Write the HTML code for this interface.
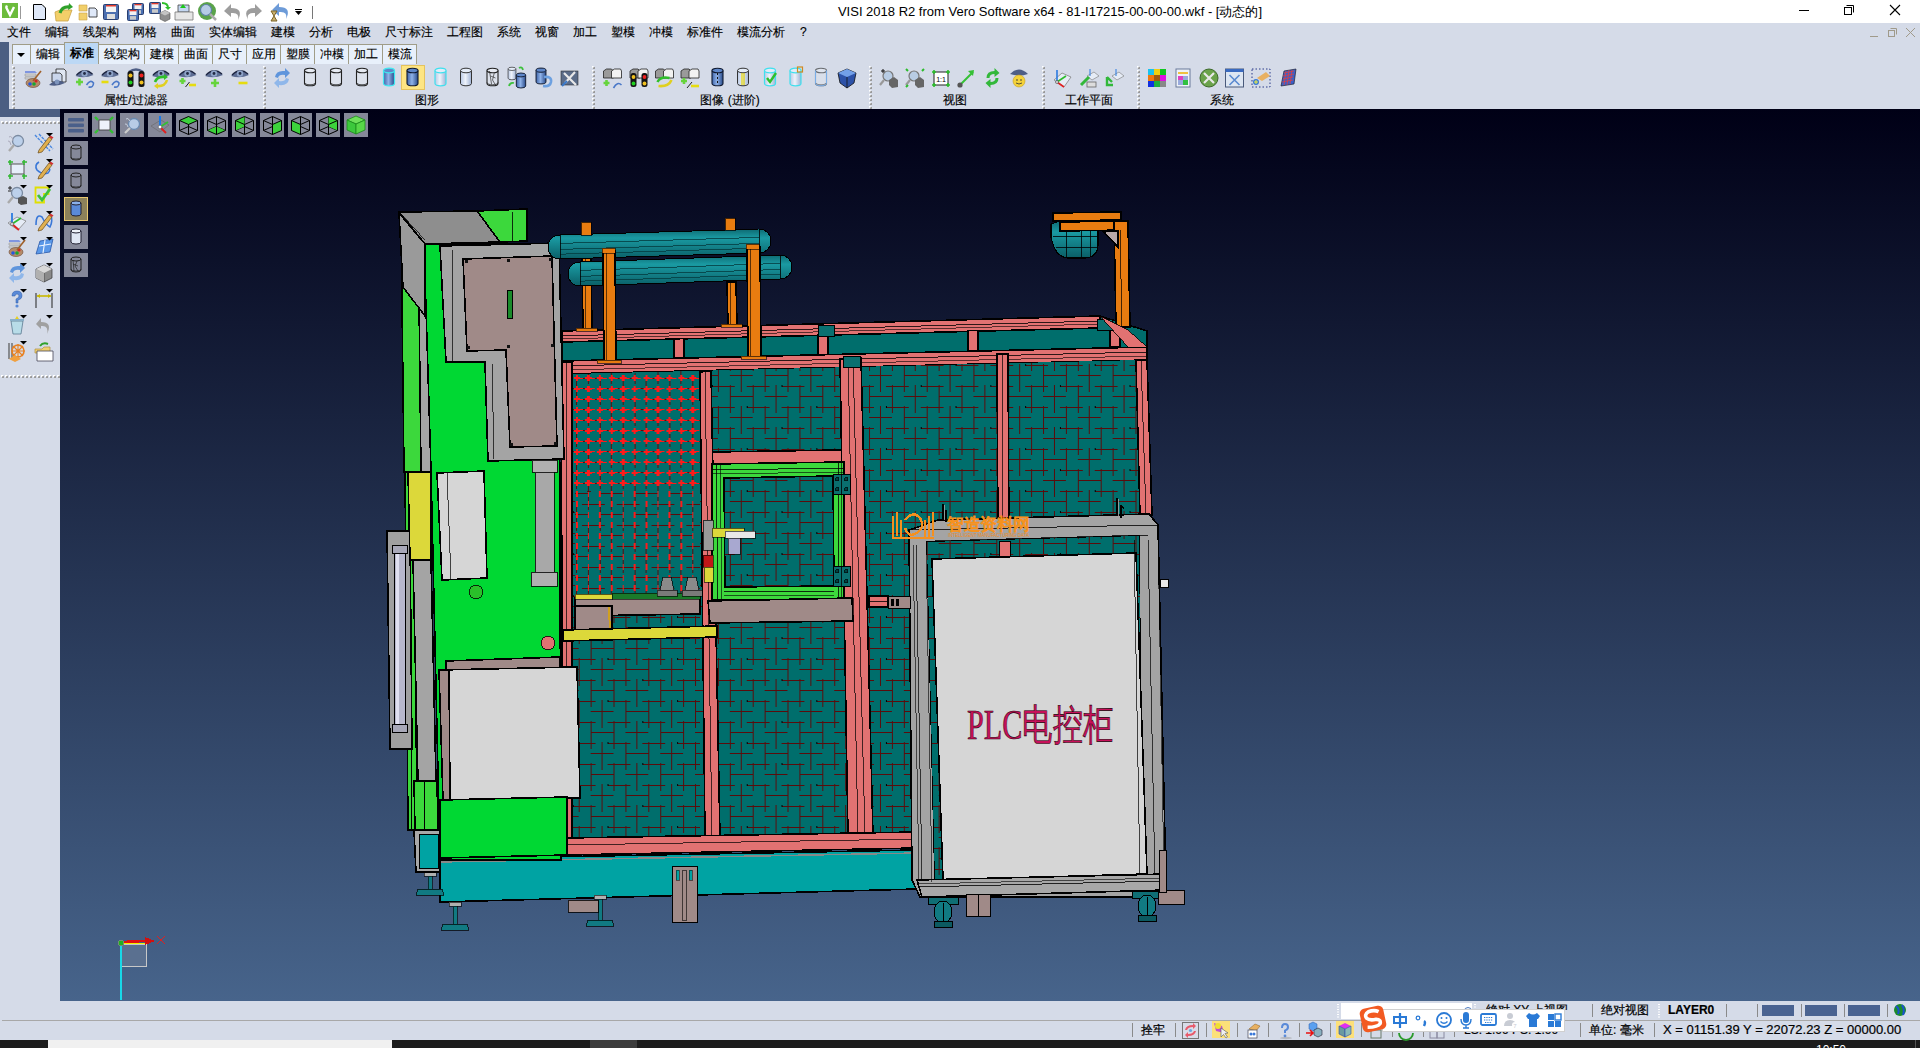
<!DOCTYPE html>
<html><head><meta charset="utf-8">
<style>
*{margin:0;padding:0;box-sizing:border-box}
html,body{width:1920px;height:1048px;overflow:hidden;background:#d5dbe8;font-family:"Liberation Sans",sans-serif;font-size:12px;color:#000}
.a{position:absolute}
#title{left:0;top:0;width:1920px;height:23px;background:#fff}
#ttext{left:0;top:4px;width:2100px;text-align:center;font-size:13px;line-height:16px;color:#000;white-space:nowrap}
#menu{left:0;top:23px;width:1920px;height:19px;background:#d5dbe8}
.mi{position:absolute;top:2px;font-size:12px;line-height:15px;white-space:nowrap;-webkit-text-stroke:.15px #000}
#lblue{left:0;top:42px;width:9px;height:75px;background:#4b5e82}
#ublue{left:0;top:109px;width:60px;height:8px;background:#4b5e82}
#ribbon{left:9px;top:42px;width:1911px;height:67px;background:#d5dbe8}
.tab{-webkit-text-stroke:.15px #000;position:absolute;top:44px;height:20px;border:1px solid #a09d88;border-bottom:none;background:#e8f0fb;font-size:12px;line-height:18px;text-align:center;white-space:nowrap}
.tab.sel{-webkit-text-stroke:0;top:42px;height:22px;background:#bcd8f5;line-height:20px}
.glab{position:absolute;top:93px;font-size:12px;line-height:14px;white-space:nowrap;text-align:center;-webkit-text-stroke:.15px #000}
.sep{position:absolute;top:64px;width:4px;height:45px;background-image:linear-gradient(135deg,#fff 0 45%,#8a8a8a 55% 100%);background-size:4px 4px;-webkit-mask-image:linear-gradient(#000 0 0);}
#ltool{left:0;top:117px;width:60px;height:884px;background:#d5dbe8}
#view{left:60px;top:109px;width:1860px;height:892px;background:linear-gradient(#000016,#47648b)}
#status{left:0;top:1001px;width:1920px;height:39px;background:#d5dbe8}
#task{left:0;top:1040px;width:1920px;height:8px;background:#1c1c1c}
.tile{position:absolute;width:24px;height:24px;background:#858899}
.st{position:absolute;font-size:12px;line-height:15px;white-space:nowrap;-webkit-text-stroke:.2px #000}
</style></head><body>

<div id="title" class="a"></div>
<div id="ttext" class="a">VISI 2018 R2 from Vero Software x64 - 81-I17215-00-00-00.wkf - [动态的]</div>
<div id="menu" class="a">
<span class="mi" style="left:7px">文件</span>
<span class="mi" style="left:45px">编辑</span>
<span class="mi" style="left:83px">线架构</span>
<span class="mi" style="left:133px">网格</span>
<span class="mi" style="left:171px">曲面</span>
<span class="mi" style="left:209px">实体编辑</span>
<span class="mi" style="left:271px">建模</span>
<span class="mi" style="left:309px">分析</span>
<span class="mi" style="left:347px">电极</span>
<span class="mi" style="left:385px">尺寸标注</span>
<span class="mi" style="left:447px">工程图</span>
<span class="mi" style="left:497px">系统</span>
<span class="mi" style="left:535px">视窗</span>
<span class="mi" style="left:573px">加工</span>
<span class="mi" style="left:611px">塑模</span>
<span class="mi" style="left:649px">冲模</span>
<span class="mi" style="left:687px">标准件</span>
<span class="mi" style="left:737px">模流分析</span>
<span class="mi" style="left:800px">?</span>
</div>
<div id="lblue" class="a"></div>
<div id="ribbon" class="a"></div>
<div id="ublue" class="a"></div>
<div id="ltool" class="a"></div>
<div id="view" class="a"></div>
<div id="status" class="a"></div>
<div id="task" class="a"></div>

<svg class="a" style="left:0;top:0" width="1920" height="110" viewBox="0 0 1920 110">
<defs>
<linearGradient id="gcyl" x1="0" x2="1"><stop offset="0" stop-color="#3d63a8"/><stop offset=".45" stop-color="#8fb2e8"/><stop offset="1" stop-color="#284a8a"/></linearGradient>
<linearGradient id="gcylL" x1="0" x2="1"><stop offset="0" stop-color="#b8c8e4"/><stop offset=".45" stop-color="#eef3fb"/><stop offset="1" stop-color="#9fb2d4"/></linearGradient>
<symbol id="eye" viewBox="0 0 20 12"><path d="M1,8 Q10,-2 19,7 Q10,11 1,8Z" fill="#5d6d93"/><path d="M2,7 Q10,-1 18,6" stroke="#1d2540" stroke-width="1.3" fill="none"/><circle cx="10" cy="5.5" r="3.2" fill="#8fa4c8"/><circle cx="10" cy="5.5" r="1.4" fill="#222a44"/></symbol>
<symbol id="cylO" viewBox="0 0 14 20"><path d="M1.5,3.5 V16.5 A5.5,2.3 0 0 0 12.5,16.5 V3.5" fill="#dde2ec" stroke="#222" stroke-width="1.1"/><ellipse cx="7" cy="3.5" rx="5.5" ry="2.3" fill="#e6eaf2" stroke="#222" stroke-width="1.1"/><path d="M1.5,15.5 A5.5,2.3 0 0 0 12.5,15.5" fill="none" stroke="#222" stroke-width=".8"/></symbol>
<symbol id="cylB" viewBox="0 0 14 20"><path d="M1.5,3.5 V16.5 A5.5,2.3 0 0 0 12.5,16.5 V3.5" fill="url(#gcyl)" stroke="#101a30" stroke-width="1.1"/><ellipse cx="7" cy="3.5" rx="5.5" ry="2.3" fill="#5e86c8" stroke="#101a30" stroke-width="1.1"/></symbol>
<symbol id="cylC" viewBox="0 0 14 20"><path d="M1.5,3.5 V16.5 A5.5,2.3 0 0 0 12.5,16.5 V3.5" fill="url(#gcyl)" stroke="#3ee8f0" stroke-width="1.2"/><ellipse cx="7" cy="3.5" rx="5.5" ry="2.3" fill="#5e86c8" stroke="#3ee8f0" stroke-width="1.2"/></symbol>
<symbol id="cylL" viewBox="0 0 14 20"><path d="M1.5,3.5 V16.5 A5.5,2.3 0 0 0 12.5,16.5 V3.5" fill="url(#gcylL)" stroke="#40e0ee" stroke-width="1.2"/><ellipse cx="7" cy="3.5" rx="5.5" ry="2.3" fill="#e4ecf8" stroke="#40e0ee" stroke-width="1.2"/></symbol>
<symbol id="cylG" viewBox="0 0 14 20"><path d="M1.5,3.5 V16.5 A5.5,2.3 0 0 0 12.5,16.5 V3.5" fill="url(#gcylL)" stroke="#333" stroke-width="1"/><ellipse cx="7" cy="3.5" rx="5.5" ry="2.3" fill="#e4ecf8" stroke="#333" stroke-width="1"/></symbol>
<symbol id="cubes" viewBox="0 0 20 12"><path d="M1,3 L4,1 H9 L11,3 V10 H1Z" fill="#9a9a9a" stroke="#222" stroke-width=".8"/><path d="M9,3 L12,1 H18 L19,3 V10 H9Z" fill="#f2f2f2" stroke="#222" stroke-width=".8"/></symbol>
</defs>
<!-- title bar icons -->
<rect x="2" y="3" width="16" height="15" fill="#6cbb3c"/><path d="M6,7 L10,15 L14,7" stroke="#fff" stroke-width="2.4" fill="none"/><circle cx="6.5" cy="6.5" r="1.2" fill="#fff"/>
<rect x="20" y="6" width="1" height="13" fill="#999"/>
<path d="M33.5,4.5 H42 L45.5,8 V19.5 H33.5Z" fill="#dfe8f8" stroke="#000" stroke-width="1"/>
<path d="M55,12 L60,10 H72 L68,21 H56Z" fill="#f3cf69" stroke="#c9a247" stroke-width=".8"/><path d="M60,13 Q62,6 70,7" stroke="#2fa12a" stroke-width="3" fill="none"/><path d="M69,3 L73,7 L68,10Z" fill="#2fa12a"/>
<path d="M79,5 H87 V11 H79Z M79,13 H87 V20 H79Z" fill="#f1cf6a" stroke="#c9a247" stroke-width=".6"/><path d="M89,8 H95 L97,10 V17 H89Z" fill="#dfe8f8" stroke="#222" stroke-width=".8"/>
<rect x="103.5" y="4.5" width="15" height="15" rx="1" fill="#4c6fb0" stroke="#2a3f70"/><rect x="106" y="5" width="10" height="7" fill="#f4f4f4"/><rect x="106" y="5" width="10" height="1.5" fill="#e23b2e"/><rect x="107" y="14" width="8" height="5" fill="#ddd"/>
<rect x="132.5" y="3.5" width="11" height="11" rx="1" fill="#4a6fb2" stroke="#2a3f70" stroke-width="1"/><rect x="134.5" y="4" width="7" height="5.0" fill="#f2f2f2"/><rect x="134.5" y="4" width="7" height="1.3" fill="#e03a2e"/><rect x="135" y="10.2" width="6" height="3.6" fill="#c8c8c8"/><rect x="127.5" y="9.5" width="11" height="11" rx="1" fill="#4a6fb2" stroke="#2a3f70" stroke-width="1"/><rect x="129.5" y="10" width="7" height="5.0" fill="#f2f2f2"/><rect x="129.5" y="10" width="7" height="1.3" fill="#e03a2e"/><rect x="130" y="16.1" width="6" height="3.6" fill="#c8c8c8"/><rect x="149.5" y="2.5" width="11" height="11" rx="1" fill="#4a6fb2" stroke="#2a3f70" stroke-width="1"/><rect x="151.5" y="3" width="7" height="5.0" fill="#f2f2f2"/><rect x="151.5" y="3" width="7" height="1.3" fill="#e03a2e"/><rect x="152" y="9.2" width="6" height="3.6" fill="#c8c8c8"/><path d="M160,13 L165,10.5 L170,13 V19 L165,21.5 L160,19Z" fill="#8e8e8e" stroke="#555" stroke-width=".6"/><path d="M160,13 L165,15.5 L170,13 L165,10.5Z" fill="#c4c4c4"/><path d="M162,3 Q168,3 168,8" stroke="#2fbf2a" stroke-width="2" fill="none"/><path d="M165,7 L168,10 L171,7Z" fill="#2fbf2a"/><path d="M178,5 H189 V12 H178Z" fill="#c4d7f2" stroke="#444" stroke-width=".8"/><path d="M175,12 H193 V20 H175Z" fill="#e6e6e6" stroke="#777" stroke-width=".8"/><path d="M183,4 L180,8 H186Z" fill="#1cc61c"/>
<circle cx="207" cy="11" r="9" fill="#5aa34a"/><circle cx="206" cy="10" r="5.5" fill="#b6cce6" stroke="#5c7fa6" stroke-width="1.2"/><path d="M210,14 L216,20" stroke="#aaa" stroke-width="2.5"/>
<path d="M231,4 L224,11 L231,17 V13 Q240,12 238,20 Q244,8 231,8Z" fill="#9d9d9d"/>
<path d="M255,4 L262,11 L255,17 V13 Q246,12 248,20 Q242,8 255,8Z" fill="#9d9d9d"/>
<path d="M279,3 L272,10 L279,16 V12 Q288,11 286,19 Q292,7 279,7Z" fill="#6d9bd8"/><path d="M271,11 H277 L271,21 H277Z" fill="#c8b070" stroke="#7a6225" stroke-width="1"/>
<rect x="295" y="9" width="7" height="1" fill="#000"/><path d="M295,11 H302 L298.5,15Z" fill="#000"/>
<rect x="312" y="6" width="1" height="13" fill="#777"/>
<!-- window controls -->
<rect x="1799" y="10" width="10" height="1" fill="#000"/>
<rect x="1844.5" y="7.5" width="7" height="7" fill="none" stroke="#000"/><path d="M1846.5,5.5 H1853.5 V12.5" fill="none" stroke="#000"/>
<path d="M1890,5 L1900,15 M1900,5 L1890,15" stroke="#000" stroke-width="1.1"/>
<!-- mdi controls -->
<rect x="1870" y="36" width="8" height="1" fill="#a09a8a"/>
<rect x="1888.5" y="30.5" width="6" height="6" fill="none" stroke="#a09a8a"/><path d="M1890.5,28.5 H1896.5 V34.5" fill="none" stroke="#a09a8a"/>
<path d="M1906,28 L1915,37 M1915,28 L1906,37" stroke="#a09a8a" stroke-width="1"/>
<g transform="translate(23,68)"><path d="M2,3 H12 L14,5 H2Z" fill="#7f95e0"/><path d="M2,6 H13 V8 H2Z M2,9 H13 V11 H2Z" fill="#d8d8d8" stroke="#888" stroke-width=".5"/><ellipse cx="10" cy="15" rx="7" ry="4.5" fill="#b58a68" stroke="#6a4a36" stroke-width=".6"/><circle cx="7" cy="16" r="1.8" fill="#2457e0"/><circle cx="11" cy="16" r="1.8" fill="#19a632"/><circle cx="13" cy="13" r="1.6" fill="#d02424"/><path d="M10,13 L18,3" stroke="#a0602a" stroke-width="1.6"/></g>
<g transform="translate(48,68)"><path d="M8,1 H16 L18,3 V14 H8Z" fill="#dfe6f2" stroke="#222" stroke-width=".8"/><path d="M4,5 H12 L14,7 V14 H4Z" fill="#cad6ec" stroke="#222" stroke-width=".8"/><path d="M1,17 Q9,9 17,15 Q9,19 1,17Z" fill="#4e5e86"/><circle cx="9" cy="14" r="2.4" fill="#7d94bc"/></g>
<g transform="translate(74.5,68)"><use href="#eye" x="0" y="0" width="20" height="12"/><path d="M1.5,14h7M5,10.5v7" stroke="#66d43c" stroke-width="2.6"/><path d="M12,17 Q16,11 19,15 Q19,20 14,19" stroke="#4a78c8" stroke-width="1.6" fill="none"/></g>
<g transform="translate(100,68)"><use href="#eye" x="0" y="0" width="20" height="12"/><path d="M1.5,14h7" stroke="#e6dc10" stroke-width="2.6"/><path d="M12,17 Q16,11 19,15 Q19,20 14,19" stroke="#4a78c8" stroke-width="1.6" fill="none"/></g>
<g transform="translate(126,68)"><path d="M3,4 Q10,-1 17,4" stroke="#4e5e86" stroke-width="2.5" fill="none"/><rect x="1.5" y="3" width="6" height="16" rx="2.5" fill="#151515"/><rect x="12.5" y="3" width="6" height="16" rx="2.5" fill="#151515"/><circle cx="4.5" cy="7.5" r="2" fill="#f0c020"/><circle cx="4.5" cy="14.5" r="2" fill="#20d020"/><circle cx="15.5" cy="7.5" r="2" fill="#f02020"/><circle cx="15.5" cy="14.5" r="2" fill="#f0c020"/></g>
<g transform="translate(151,68)"><use href="#eye" x="0" y="0" width="20" height="12"/><path d="M4,14 Q6,8 14,9" stroke="#2fbf2a" stroke-width="2.6" fill="none"/><path d="M16,12 Q14,19 5,18" stroke="#e0d020" stroke-width="2.6" fill="none"/><path d="M13,6 L17,9 L13,12Z" fill="#2fbf2a"/><path d="M7,15 L3,18 L7,21Z" fill="#e0d020"/></g>
<g transform="translate(177.5,68)"><use href="#eye" x="0" y="0" width="20" height="12"/><path d="M2.0,13h6M5,10.0v6" stroke="#66d43c" stroke-width="2.6"/><path d="M8,19 L12,14" stroke="#222" stroke-width="1"/><path d="M11.5,17h7" stroke="#e6dc10" stroke-width="2.6"/></g>
<g transform="translate(204,68)"><use href="#eye" x="0" y="0" width="20" height="12"/><path d="M7.0,15h8M11,11.0v8" stroke="#66d43c" stroke-width="2.6"/></g>
<g transform="translate(230,68)"><use href="#eye" x="0" y="0" width="20" height="12"/><path d="M8.5,15h9" stroke="#e6dc10" stroke-width="2.6"/></g>
<g transform="translate(272,68)"><path d="M3,9 Q4,2 13,3 L13,0 L18,5 L13,10 V7 Q7,6 6,10Z" fill="#5f95dc"/><path d="M17,11 Q16,18 7,17 L7,20 L2,15 L7,10 V13 Q13,14 14,10Z" fill="#8fb7ea"/></g>
<g transform="translate(303,67)"><use href="#cylO" width="14" height="20"/></g>
<g transform="translate(329,67)"><use href="#cylO" width="14" height="20"/></g>
<g transform="translate(355,67)"><use href="#cylO" width="14" height="20"/></g>
<g transform="translate(382,67)"><use href="#cylC" width="14" height="20"/></g>
<rect x="401.5" y="65.5" width="23" height="24" fill="#fde583" stroke="#e5c35e"/>
<g transform="translate(405.5,67)"><use href="#cylB" width="14" height="20"/></g>
<g transform="translate(433.5,67)"><use href="#cylL" width="14" height="20"/></g>
<g transform="translate(459,67)"><use href="#cylG" width="14" height="20"/></g>
<g transform="translate(485.5,67)"><use href="#cylO" width="14" height="20"/><path d="M4,4 L6,17 M9,5 L7,13 L10,18 M5,9 L10,11" stroke="#333" stroke-width=".7" fill="none"/></g>
<g transform="translate(507,66)"><use href="#cylG" width="10" height="15"/><use href="#cylB" x="8" y="6" width="12" height="17"/><path d="M12,2 Q15,0 16,4" stroke="#3cc03c" stroke-width="1.8" fill="none"/><path d="M2,20 Q3,16 7,17" stroke="#3cc03c" stroke-width="1.8" fill="none"/></g>
<g transform="translate(534,67)"><use href="#cylB" width="14" height="18"/><path d="M10,10 Q18,9 17,15 Q16,20 9,19" stroke="#6ca0e0" stroke-width="2.6" fill="none"/></g>
<g transform="translate(560,68)"><rect x="1" y="3" width="17" height="14" fill="#5b6c88" stroke="#333" stroke-width=".6"/><path d="M4,5 L16,17 M15,4 L5,15" stroke="#e8e8e8" stroke-width="2.2"/><path d="M2,18 L7,13" stroke="#3a78c8" stroke-width="2"/></g>
<g transform="translate(602.5,68)"><use href="#cubes" width="20" height="12"/><path d="M1.0,15h6M4,12.0v6" stroke="#66d43c" stroke-width="2.6"/><path d="M11,20 Q15,13 19,17" stroke="#4a78c8" stroke-width="1.6" fill="none"/></g>
<g transform="translate(629,68)"><use href="#cubes" width="20" height="12"/><rect x="1.5" y="5" width="6" height="14" rx="2.5" fill="#151515"/><rect x="12.5" y="5" width="6" height="14" rx="2.5" fill="#151515"/><circle cx="4.5" cy="9" r="1.9" fill="#f0c020"/><circle cx="4.5" cy="15.5" r="1.9" fill="#20d020"/><circle cx="15.5" cy="9" r="1.9" fill="#f02020"/><circle cx="15.5" cy="15.5" r="1.9" fill="#f0c020"/></g>
<g transform="translate(654.5,68)"><use href="#cubes" width="20" height="12"/><path d="M3,14 Q6,8 15,10" stroke="#2fbf2a" stroke-width="2.6" fill="none"/><path d="M17,12 Q14,19 4,18" stroke="#e0d020" stroke-width="2.6" fill="none"/></g>
<g transform="translate(680,68)"><use href="#cubes" width="20" height="12"/><path d="M1.0,13h6M4,10.0v6" stroke="#66d43c" stroke-width="2.6"/><path d="M7,20 L12,14" stroke="#222" stroke-width="1"/><path d="M11.0,18h8" stroke="#e6dc10" stroke-width="2.6"/></g>
<g transform="translate(710.5,67)"><use href="#cylB" width="14" height="20"/><path d="M7,6 V18" stroke="#111" stroke-width="1" stroke-dasharray="2,2"/></g>
<g transform="translate(736,67)"><use href="#cylG" width="14" height="20"/><path d="M6,6 V18 M8,6 V18" stroke="#e0d000" stroke-width="1.2"/></g>
<g transform="translate(763,67)"><use href="#cylL" width="14" height="20"/><path d="M4,11 L7,15 L13,6" stroke="#2cc02c" stroke-width="2.4" fill="none"/></g>
<g transform="translate(788.5,67)"><use href="#cylL" width="14" height="20"/><rect x="9" y="0" width="5" height="5" fill="none" stroke="#d08a20" stroke-width="1.2"/></g>
<g transform="translate(814,67)"><use href="#cylO" width="14" height="20"/><rect x="0" y="0" width="14" height="20" fill="#d5dbe8" opacity=".4"/><path d="M1.5,3.5 V16.5 A5.5,2.3 0 0 0 12.5,16.5 V3.5" fill="none" stroke="#7aaee8" stroke-width="1"/></g>
<g transform="translate(837,68)"><path d="M1,5 L10,1 L19,5 L17,15 L10,20 L3,15Z" fill="#2d52a8" stroke="#111" stroke-width=".8"/><path d="M1,5 L10,9 L19,5 L10,1Z" fill="#73a0e8"/><path d="M10,9 V20" stroke="#111" stroke-width=".8"/></g>
<g transform="translate(879,68)"><path d="M2,3h4M4,1v4" stroke="#111" stroke-width="1"/><circle cx="9" cy="8" r="5" fill="#b8cce4" stroke="#777" stroke-width="1.2"/><path d="M5,12 L1,17" stroke="#999" stroke-width="2.2"/><path d="M10,12 L15,9 L19,12 V19 L13,20 L10,17Z" fill="#666"/></g>
<g transform="translate(905,68)"><circle cx="9" cy="8" r="5" fill="#b8cce4" stroke="#777" stroke-width="1.2"/><path d="M5,12 L1,17" stroke="#999" stroke-width="2.2"/><path d="M10,12 L15,9 L19,12 V19 L13,20 L10,17Z" fill="#666"/><path d="M1,1 L3,3 M19,1 L17,3 M1,19 L3,17" stroke="#2cbc2c" stroke-width="2"/></g>
<g transform="translate(931,68)"><rect x="3" y="4" width="14" height="13" fill="#fff" stroke="#222"/><text x="10" y="14" font-size="7" text-anchor="middle" font-family="Liberation Sans">1:1</text><path d="M1,4h4M3,2v4M15,4h4M17,2v4M1,17h4M3,15v4M15,17h4M17,15v4" stroke="#2cbc2c" stroke-width="1.6"/></g>
<g transform="translate(956,68)"><path d="M5,16 L17,4" stroke="#35c035" stroke-width="2"/><path d="M12,3 L18,2 L17,8Z" fill="#35c035"/><circle cx="4" cy="17" r="2.6" fill="#555"/></g>
<g transform="translate(982.5,68)"><path d="M4,10 Q4,3 12,3 L12,0 L17,5 L12,9 V6 Q7,6 7,10Z" fill="#32b83a"/><path d="M16,10 Q16,17 8,17 L8,20 L3,15 L8,11 V14 Q13,14 13,10Z" fill="#32b83a"/></g>
<g transform="translate(1009,68)"><path d="M1,6 Q10,-3 19,6 Q10,9 1,6Z" fill="#4e5e86"/><circle cx="10" cy="13" r="6" fill="#f4d23a" stroke="#c8a020" stroke-width=".6"/><circle cx="8" cy="12" r=".8" fill="#333"/><circle cx="12" cy="12" r=".8" fill="#333"/><path d="M7,15 Q10,17 13,15" stroke="#333" stroke-width=".8" fill="none"/></g>
<g transform="translate(1052,68)"><path d="M2,12 L10,5 L19,9 L12,19Z" fill="#e6ecf6" stroke="#777" stroke-width=".7"/><path d="M5,14 V2" stroke="#2a7ae0" stroke-width="1.6"/><path d="M5,14 L14,8" stroke="#2cbc2c" stroke-width="1.6"/><path d="M5,14 L12,19" stroke="#e02020" stroke-width="1.6"/><circle cx="5" cy="14" r="1.6" fill="#ccc" stroke="#444" stroke-width=".5"/></g>
<g transform="translate(1079,68)"><path d="M8,8 L15,4 L20,8 L13,12Z" fill="#e6ecf6" stroke="#777" stroke-width=".6"/><path d="M2,17 L10,9" stroke="#32b83a" stroke-width="3"/><rect x="8" y="14" width="9" height="5" fill="#ddd" stroke="#666" stroke-width=".8"/><path d="M11,8 V1" stroke="#2a7ae0" stroke-width="1"/></g>
<g transform="translate(1104,68)"><path d="M8,8 L15,4 L20,8 L13,12Z" fill="#e6ecf6" stroke="#777" stroke-width=".6"/><path d="M3,9 L8,14 M3,9 V17 H9" stroke="#32b83a" stroke-width="2.4" fill="none"/><path d="M12,8 V1" stroke="#2a7ae0" stroke-width="1"/></g>
<g transform="translate(1147,68)"><rect x="1" y="1" width="6" height="6" fill="#19c3f0"/><rect x="7" y="1" width="6" height="6" fill="#f0d010"/><rect x="13" y="1" width="6" height="6" fill="#10c820"/><rect x="1" y="7" width="6" height="6" fill="#f07810"/><rect x="7" y="7" width="6" height="6" fill="#a05a10"/><rect x="13" y="7" width="6" height="6" fill="#e010e0"/><rect x="1" y="13" width="6" height="6" fill="#1030e0"/><rect x="7" y="13" width="6" height="6" fill="#20b040"/><rect x="13" y="13" width="6" height="6" fill="#888888"/></g>
<g transform="translate(1173,68)"><rect x="3" y="1" width="14" height="18" fill="#eef2f8" stroke="#6a7a9a"/><rect x="5" y="4" width="10" height="2" fill="#f0c040"/><rect x="5" y="8" width="10" height="9" fill="#9ad"/><rect x="5" y="8" width="5" height="4" fill="#e040c0"/><rect x="10" y="12" width="5" height="5" fill="#30c040"/></g>
<g transform="translate(1199,68)"><circle cx="10" cy="10" r="9" fill="#6aa24a" stroke="#3d6a2a" stroke-width="1"/><path d="M5,5 L15,15 M15,5 L5,15" stroke="#e8e8e8" stroke-width="2.2"/></g>
<g transform="translate(1224.5,68)"><rect x="1" y="1" width="18" height="18" fill="#dde6f2" stroke="#4a5a7a"/><rect x="1" y="1" width="18" height="3" fill="#3a6ac0"/><path d="M5,7 L15,17 M15,7 L5,17" stroke="#5a8ad0" stroke-width="1.6"/></g>
<g transform="translate(1251,68)"><path d="M1,1h18v18h-18z" fill="none" stroke="#2a3a8a" stroke-width="1" stroke-dasharray="1.5,2"/><path d="M6,10 L15,4 L19,8 L11,13Z" fill="#e8b060"/><circle cx="5" cy="14" r="3" fill="#3a7ad8"/><path d="M3,14h4M5,12v4" stroke="#f0f040" stroke-width="1"/></g>
<g transform="translate(1277,68)"><path d="M4,18 L7,3 L19,1 L17,16Z" fill="#3a60c8" stroke="#223" stroke-width=".7"/><path d="M7,5 L17,3 M6,8 L17,6 M6,11 L16,9 M5,14 L16,12 M9,3 L7,17 M12,2 L10,17 M15,2 L13,16" stroke="#e04040" stroke-width=".8"/></g>
</svg>

<div class="tab" style="left:12px;width:19px"><svg width="16" height="18" style="position:absolute;left:1px;top:0"><path d="M3,8 H11 L7,12Z" fill="#000"/></svg></div>
<div class="tab" style="left:30px;width:35px;">编辑</div>
<div class="tab sel" style="left:64px;width:35px;font-weight:bold;">标准</div>
<div class="tab" style="left:98px;width:47px;">线架构</div>
<div class="tab" style="left:144px;width:35px;">建模</div>
<div class="tab" style="left:178px;width:35px;">曲面</div>
<div class="tab" style="left:212px;width:35px;">尺寸</div>
<div class="tab" style="left:246px;width:35px;">应用</div>
<div class="tab" style="left:280px;width:35px;">塑膜</div>
<div class="tab" style="left:314px;width:35px;">冲模</div>
<div class="tab" style="left:348px;width:35px;">加工</div>
<div class="tab" style="left:382px;width:35px;">模流</div>
<div class="glab" style="left:76px;width:120px">属性/过滤器</div>
<div class="glab" style="left:367px;width:120px">图形</div>
<div class="glab" style="left:670px;width:120px">图像 (进阶)</div>
<div class="glab" style="left:895px;width:120px">视图</div>
<div class="glab" style="left:1029px;width:120px">工作平面</div>
<div class="glab" style="left:1162px;width:120px">系统</div>
<svg class="a" style="left:0;top:60px" width="1200" height="50"><rect x="13" y="7" width="2" height="2" fill="#9a9a9a"/><rect x="12" y="6" width="1.6" height="1.6" fill="#fff"/><rect x="13" y="11" width="2" height="2" fill="#9a9a9a"/><rect x="12" y="10" width="1.6" height="1.6" fill="#fff"/><rect x="13" y="15" width="2" height="2" fill="#9a9a9a"/><rect x="12" y="14" width="1.6" height="1.6" fill="#fff"/><rect x="13" y="19" width="2" height="2" fill="#9a9a9a"/><rect x="12" y="18" width="1.6" height="1.6" fill="#fff"/><rect x="13" y="23" width="2" height="2" fill="#9a9a9a"/><rect x="12" y="22" width="1.6" height="1.6" fill="#fff"/><rect x="13" y="27" width="2" height="2" fill="#9a9a9a"/><rect x="12" y="26" width="1.6" height="1.6" fill="#fff"/><rect x="13" y="31" width="2" height="2" fill="#9a9a9a"/><rect x="12" y="30" width="1.6" height="1.6" fill="#fff"/><rect x="13" y="35" width="2" height="2" fill="#9a9a9a"/><rect x="12" y="34" width="1.6" height="1.6" fill="#fff"/><rect x="13" y="39" width="2" height="2" fill="#9a9a9a"/><rect x="12" y="38" width="1.6" height="1.6" fill="#fff"/><rect x="13" y="43" width="2" height="2" fill="#9a9a9a"/><rect x="12" y="42" width="1.6" height="1.6" fill="#fff"/><rect x="13" y="47" width="2" height="2" fill="#9a9a9a"/><rect x="12" y="46" width="1.6" height="1.6" fill="#fff"/><rect x="264" y="7" width="2" height="2" fill="#9a9a9a"/><rect x="263" y="6" width="1.6" height="1.6" fill="#fff"/><rect x="264" y="11" width="2" height="2" fill="#9a9a9a"/><rect x="263" y="10" width="1.6" height="1.6" fill="#fff"/><rect x="264" y="15" width="2" height="2" fill="#9a9a9a"/><rect x="263" y="14" width="1.6" height="1.6" fill="#fff"/><rect x="264" y="19" width="2" height="2" fill="#9a9a9a"/><rect x="263" y="18" width="1.6" height="1.6" fill="#fff"/><rect x="264" y="23" width="2" height="2" fill="#9a9a9a"/><rect x="263" y="22" width="1.6" height="1.6" fill="#fff"/><rect x="264" y="27" width="2" height="2" fill="#9a9a9a"/><rect x="263" y="26" width="1.6" height="1.6" fill="#fff"/><rect x="264" y="31" width="2" height="2" fill="#9a9a9a"/><rect x="263" y="30" width="1.6" height="1.6" fill="#fff"/><rect x="264" y="35" width="2" height="2" fill="#9a9a9a"/><rect x="263" y="34" width="1.6" height="1.6" fill="#fff"/><rect x="264" y="39" width="2" height="2" fill="#9a9a9a"/><rect x="263" y="38" width="1.6" height="1.6" fill="#fff"/><rect x="264" y="43" width="2" height="2" fill="#9a9a9a"/><rect x="263" y="42" width="1.6" height="1.6" fill="#fff"/><rect x="264" y="47" width="2" height="2" fill="#9a9a9a"/><rect x="263" y="46" width="1.6" height="1.6" fill="#fff"/><rect x="593" y="7" width="2" height="2" fill="#9a9a9a"/><rect x="592" y="6" width="1.6" height="1.6" fill="#fff"/><rect x="593" y="11" width="2" height="2" fill="#9a9a9a"/><rect x="592" y="10" width="1.6" height="1.6" fill="#fff"/><rect x="593" y="15" width="2" height="2" fill="#9a9a9a"/><rect x="592" y="14" width="1.6" height="1.6" fill="#fff"/><rect x="593" y="19" width="2" height="2" fill="#9a9a9a"/><rect x="592" y="18" width="1.6" height="1.6" fill="#fff"/><rect x="593" y="23" width="2" height="2" fill="#9a9a9a"/><rect x="592" y="22" width="1.6" height="1.6" fill="#fff"/><rect x="593" y="27" width="2" height="2" fill="#9a9a9a"/><rect x="592" y="26" width="1.6" height="1.6" fill="#fff"/><rect x="593" y="31" width="2" height="2" fill="#9a9a9a"/><rect x="592" y="30" width="1.6" height="1.6" fill="#fff"/><rect x="593" y="35" width="2" height="2" fill="#9a9a9a"/><rect x="592" y="34" width="1.6" height="1.6" fill="#fff"/><rect x="593" y="39" width="2" height="2" fill="#9a9a9a"/><rect x="592" y="38" width="1.6" height="1.6" fill="#fff"/><rect x="593" y="43" width="2" height="2" fill="#9a9a9a"/><rect x="592" y="42" width="1.6" height="1.6" fill="#fff"/><rect x="593" y="47" width="2" height="2" fill="#9a9a9a"/><rect x="592" y="46" width="1.6" height="1.6" fill="#fff"/><rect x="870" y="7" width="2" height="2" fill="#9a9a9a"/><rect x="869" y="6" width="1.6" height="1.6" fill="#fff"/><rect x="870" y="11" width="2" height="2" fill="#9a9a9a"/><rect x="869" y="10" width="1.6" height="1.6" fill="#fff"/><rect x="870" y="15" width="2" height="2" fill="#9a9a9a"/><rect x="869" y="14" width="1.6" height="1.6" fill="#fff"/><rect x="870" y="19" width="2" height="2" fill="#9a9a9a"/><rect x="869" y="18" width="1.6" height="1.6" fill="#fff"/><rect x="870" y="23" width="2" height="2" fill="#9a9a9a"/><rect x="869" y="22" width="1.6" height="1.6" fill="#fff"/><rect x="870" y="27" width="2" height="2" fill="#9a9a9a"/><rect x="869" y="26" width="1.6" height="1.6" fill="#fff"/><rect x="870" y="31" width="2" height="2" fill="#9a9a9a"/><rect x="869" y="30" width="1.6" height="1.6" fill="#fff"/><rect x="870" y="35" width="2" height="2" fill="#9a9a9a"/><rect x="869" y="34" width="1.6" height="1.6" fill="#fff"/><rect x="870" y="39" width="2" height="2" fill="#9a9a9a"/><rect x="869" y="38" width="1.6" height="1.6" fill="#fff"/><rect x="870" y="43" width="2" height="2" fill="#9a9a9a"/><rect x="869" y="42" width="1.6" height="1.6" fill="#fff"/><rect x="870" y="47" width="2" height="2" fill="#9a9a9a"/><rect x="869" y="46" width="1.6" height="1.6" fill="#fff"/><rect x="1043" y="7" width="2" height="2" fill="#9a9a9a"/><rect x="1042" y="6" width="1.6" height="1.6" fill="#fff"/><rect x="1043" y="11" width="2" height="2" fill="#9a9a9a"/><rect x="1042" y="10" width="1.6" height="1.6" fill="#fff"/><rect x="1043" y="15" width="2" height="2" fill="#9a9a9a"/><rect x="1042" y="14" width="1.6" height="1.6" fill="#fff"/><rect x="1043" y="19" width="2" height="2" fill="#9a9a9a"/><rect x="1042" y="18" width="1.6" height="1.6" fill="#fff"/><rect x="1043" y="23" width="2" height="2" fill="#9a9a9a"/><rect x="1042" y="22" width="1.6" height="1.6" fill="#fff"/><rect x="1043" y="27" width="2" height="2" fill="#9a9a9a"/><rect x="1042" y="26" width="1.6" height="1.6" fill="#fff"/><rect x="1043" y="31" width="2" height="2" fill="#9a9a9a"/><rect x="1042" y="30" width="1.6" height="1.6" fill="#fff"/><rect x="1043" y="35" width="2" height="2" fill="#9a9a9a"/><rect x="1042" y="34" width="1.6" height="1.6" fill="#fff"/><rect x="1043" y="39" width="2" height="2" fill="#9a9a9a"/><rect x="1042" y="38" width="1.6" height="1.6" fill="#fff"/><rect x="1043" y="43" width="2" height="2" fill="#9a9a9a"/><rect x="1042" y="42" width="1.6" height="1.6" fill="#fff"/><rect x="1043" y="47" width="2" height="2" fill="#9a9a9a"/><rect x="1042" y="46" width="1.6" height="1.6" fill="#fff"/><rect x="1138" y="7" width="2" height="2" fill="#9a9a9a"/><rect x="1137" y="6" width="1.6" height="1.6" fill="#fff"/><rect x="1138" y="11" width="2" height="2" fill="#9a9a9a"/><rect x="1137" y="10" width="1.6" height="1.6" fill="#fff"/><rect x="1138" y="15" width="2" height="2" fill="#9a9a9a"/><rect x="1137" y="14" width="1.6" height="1.6" fill="#fff"/><rect x="1138" y="19" width="2" height="2" fill="#9a9a9a"/><rect x="1137" y="18" width="1.6" height="1.6" fill="#fff"/><rect x="1138" y="23" width="2" height="2" fill="#9a9a9a"/><rect x="1137" y="22" width="1.6" height="1.6" fill="#fff"/><rect x="1138" y="27" width="2" height="2" fill="#9a9a9a"/><rect x="1137" y="26" width="1.6" height="1.6" fill="#fff"/><rect x="1138" y="31" width="2" height="2" fill="#9a9a9a"/><rect x="1137" y="30" width="1.6" height="1.6" fill="#fff"/><rect x="1138" y="35" width="2" height="2" fill="#9a9a9a"/><rect x="1137" y="34" width="1.6" height="1.6" fill="#fff"/><rect x="1138" y="39" width="2" height="2" fill="#9a9a9a"/><rect x="1137" y="38" width="1.6" height="1.6" fill="#fff"/><rect x="1138" y="43" width="2" height="2" fill="#9a9a9a"/><rect x="1137" y="42" width="1.6" height="1.6" fill="#fff"/><rect x="1138" y="47" width="2" height="2" fill="#9a9a9a"/><rect x="1137" y="46" width="1.6" height="1.6" fill="#fff"/></svg>

<svg class="a" style="left:0;top:0" width="380" height="380" viewBox="0 0 380 380"><g transform="translate(7,133)"><circle cx="11" cy="8" r="5.5" fill="#bcd0ea" stroke="#7a8aa0" stroke-width="1.3"/><path d="M7,12 L2,18" stroke="#aaa" stroke-width="2.4"/><path d="M2,4 Q5,2 6,8 M1,8 Q3,7 4,12" stroke="#aab" stroke-width="1" fill="none"/></g>
<g transform="translate(34,133)"><path d="M1,2 L16,18 M5,1 L19,16" stroke="#4a88e0" stroke-width="1.4" stroke-dasharray="3,1"/><path d="M5,17 L15,4 L18,6 L8,19 L4,20Z" fill="#e0b050" stroke="#6a4a1a" stroke-width=".7"/><path d="M15,4 L16.5,2.5 L19.5,4.5 L18,6Z" fill="#d03030"/><path d="M12,0 h7 l-3.5,3.5z" fill="#000"/></g>
<g transform="translate(7,159)"><rect x="4" y="5" width="13" height="10" fill="#e6eefa" stroke="#555" stroke-width="1"/><path d="M1,3h5M3,1v5M15,3h5M17,1v5M1,17h5M3,15v5M15,17h5M17,15v5" stroke="#33b833" stroke-width="1.6"/></g>
<g transform="translate(34,159)"><path d="M5,3 Q0,6 3,11 Q8,16 14,14 Q18,10 13,8" stroke="#3a78d8" stroke-width="1.6" fill="none"/><path d="M5,17 L15,4 L18,6 L8,19 L4,20Z" fill="#e0b050" stroke="#6a4a1a" stroke-width=".7"/><path d="M15,4 L16.5,2.5 L19.5,4.5 L18,6Z" fill="#d03030"/><path d="M12,0 h7 l-3.5,3.5z" fill="#000"/></g>
<g transform="translate(7,185)"><path d="M1,3h4M3,1v4M1,6h4" stroke="#111" stroke-width=".9"/><circle cx="10" cy="8" r="5.5" fill="#bcd0ea" stroke="#7a8aa0" stroke-width="1.3"/><path d="M6,12 L1,18" stroke="#aaa" stroke-width="2.4"/><path d="M11,13 L16,11 L20,13 V19 L14,20 L11,18Z" fill="#555"/><path d="M13,0 h7 l-3.5,3.5z" fill="#000"/></g>
<g transform="translate(34,185)"><path d="M1.5,2.5 H14.5 V9 H10 V17.5 H1.5Z" fill="none" stroke="#e0e000" stroke-width="1.8"/><path d="M4,10 L8,15 L16,4" stroke="#3cc03c" stroke-width="2.8" fill="none"/><path d="M12,0 h7 l-3.5,3.5z" fill="#000"/></g>
<g transform="translate(7,211)"><path d="M1,12 L10,6 L19,10 L11,19Z" fill="#e6ecf6" stroke="#777" stroke-width=".7"/><path d="M5,13 V2" stroke="#2a7ae0" stroke-width="1.8"/><path d="M5,13 L14,7" stroke="#2cbc2c" stroke-width="1.8"/><path d="M5,13 L12,19" stroke="#e02020" stroke-width="1.8"/><circle cx="5" cy="13" r="1.8" fill="#ccc" stroke="#444" stroke-width=".5"/><path d="M13,0 h7 l-3.5,3.5z" fill="#000"/></g>
<g transform="translate(34,211)"><path d="M2,14 Q2,2 8,6 Q12,14 16,16 Q19,10 17,5" stroke="#3a78d8" stroke-width="1.6" fill="none"/><path d="M5,17 L15,4 L18,6 L8,19 L4,20Z" fill="#e0b050" stroke="#6a4a1a" stroke-width=".7"/><path d="M15,4 L16.5,2.5 L19.5,4.5 L18,6Z" fill="#d03030"/><path d="M12,0 h7 l-3.5,3.5z" fill="#000"/></g>
<g transform="translate(7,237)"><path d="M2,3 H12 L14,5 H2Z" fill="#7f95e0"/><path d="M2,6 H13 V8 H2Z M2,9 H13 V11 H2Z" fill="#d8d8d8" stroke="#888" stroke-width=".5"/><ellipse cx="9" cy="15" rx="7" ry="4.5" fill="#b58a68" stroke="#6a4a36" stroke-width=".6"/><circle cx="6" cy="16" r="1.8" fill="#2457e0"/><circle cx="10" cy="16" r="1.8" fill="#19a632"/><circle cx="12" cy="13" r="1.6" fill="#d02424"/><path d="M10,13 L18,3" stroke="#a0602a" stroke-width="1.6"/><path d="M13,0 h7 l-3.5,3.5z" fill="#000"/></g>
<g transform="translate(34,237)"><path d="M2,17 L6,4 L19,2 L16,15Z" fill="#5a98e8" stroke="#2a58a8" stroke-width=".8"/><path d="M5,9 L17,7 M11,3 L9,16" stroke="#e8f2ff" stroke-width="1.2"/><path d="M12,0 h7 l-3.5,3.5z" fill="#000"/></g>
<g transform="translate(7,263)"><path d="M3,9 Q4,2 13,3 L13,0 L18,5 L13,10 V7 Q7,6 6,10Z" fill="#5f95dc"/><path d="M17,11 Q16,18 7,17 L7,20 L2,15 L7,10 V13 Q13,14 14,10Z" fill="#8fb7ea"/><path d="M13,0 h7 l-3.5,3.5z" fill="#000"/></g>
<g transform="translate(34,263)"><path d="M2,6 L10,2 L18,6 V15 L10,19 L2,15Z" fill="#8a8a8a" stroke="#333" stroke-width=".7"/><path d="M2,6 L10,10 L18,6 L10,2Z" fill="#d8d8d8"/><path d="M10,10 V19" stroke="#333" stroke-width=".7"/><path d="M2,6 L10,10 V19 L2,15Z" fill="#b0b0b0"/><path d="M12,0 h7 l-3.5,3.5z" fill="#000"/></g>
<g transform="translate(7,289)"><path d="M5,7 Q5,2 10,2 Q15,2 15,7 Q15,10 11,11 V14 H9 V10 Q12,9 12,7 Q12,5 10,5 Q8,5 8,7Z" fill="#5a8ad8" stroke="#2a5aa8" stroke-width=".5"/><circle cx="10" cy="17" r="1.6" fill="#5a8ad8"/><path d="M13,0 h7 l-3.5,3.5z" fill="#000"/></g>
<g transform="translate(34,289)"><path d="M2,4 V19 M18,4 V19" stroke="#333" stroke-width="1.1"/><path d="M3,7 H17" stroke="#c8b800" stroke-width="1.6"/><path d="M3,7 l3,-2 v4z M17,7 l-3,-2 v4z" fill="#c8b800"/><path d="M12,0 h7 l-3.5,3.5z" fill="#000"/></g>
<g transform="translate(7,315)"><path d="M4,6 H16 L14,19 H6Z" fill="#b8dce8" stroke="#5a7a90" stroke-width=".8"/><rect x="3" y="4" width="14" height="2" fill="#8ab0c8"/><path d="M8,4 L10,1 L12,4Z" fill="#e8d020"/><path d="M13,0 h7 l-3.5,3.5z" fill="#000"/></g>
<g transform="translate(34,315)"><path d="M7,3 L2,9 L7,14 V11 Q15,10 13,19 Q19,7 7,7Z" fill="#a0a0a0"/><path d="M12,0 h7 l-3.5,3.5z" fill="#000"/></g>
<g transform="translate(7,341)"><path d="M2,2 V18 M5,2 V18" stroke="#555" stroke-width="1.2"/><circle cx="11" cy="10" r="6" fill="none" stroke="#e88020" stroke-width="1.6"/><path d="M11,3 V17 M4,10 H18 M6,5 L16,15 M16,5 L6,15" stroke="#e88020" stroke-width="1.1"/><path d="M2,18 L8,14 L14,18 L8,21Z" fill="#f0a040"/><path d="M13,0 h7 l-3.5,3.5z" fill="#000"/></g>
<g transform="translate(34,341)"><path d="M1,8 H8 L10,6 H16 V12 H1Z" fill="#f0d070" stroke="#b09040" stroke-width=".7"/><path d="M3,10 H19 V20 H3Z" fill="#fff" stroke="#445" stroke-width=".8"/><path d="M6,5 Q9,1 14,3" stroke="#2fa12a" stroke-width="2" fill="none"/></g>
<rect x="1" y="121" width="2" height="2" fill="#fff"/><rect x="2" y="122" width="2" height="2" fill="#9a9a9a"/><rect x="1" y="121" width="1.5" height="1.5" fill="#fff"/>
<rect x="5" y="121" width="2" height="2" fill="#fff"/><rect x="6" y="122" width="2" height="2" fill="#9a9a9a"/><rect x="5" y="121" width="1.5" height="1.5" fill="#fff"/>
<rect x="9" y="121" width="2" height="2" fill="#fff"/><rect x="10" y="122" width="2" height="2" fill="#9a9a9a"/><rect x="9" y="121" width="1.5" height="1.5" fill="#fff"/>
<rect x="13" y="121" width="2" height="2" fill="#fff"/><rect x="14" y="122" width="2" height="2" fill="#9a9a9a"/><rect x="13" y="121" width="1.5" height="1.5" fill="#fff"/>
<rect x="17" y="121" width="2" height="2" fill="#fff"/><rect x="18" y="122" width="2" height="2" fill="#9a9a9a"/><rect x="17" y="121" width="1.5" height="1.5" fill="#fff"/>
<rect x="21" y="121" width="2" height="2" fill="#fff"/><rect x="22" y="122" width="2" height="2" fill="#9a9a9a"/><rect x="21" y="121" width="1.5" height="1.5" fill="#fff"/>
<rect x="25" y="121" width="2" height="2" fill="#fff"/><rect x="26" y="122" width="2" height="2" fill="#9a9a9a"/><rect x="25" y="121" width="1.5" height="1.5" fill="#fff"/>
<rect x="29" y="121" width="2" height="2" fill="#fff"/><rect x="30" y="122" width="2" height="2" fill="#9a9a9a"/><rect x="29" y="121" width="1.5" height="1.5" fill="#fff"/>
<rect x="33" y="121" width="2" height="2" fill="#fff"/><rect x="34" y="122" width="2" height="2" fill="#9a9a9a"/><rect x="33" y="121" width="1.5" height="1.5" fill="#fff"/>
<rect x="37" y="121" width="2" height="2" fill="#fff"/><rect x="38" y="122" width="2" height="2" fill="#9a9a9a"/><rect x="37" y="121" width="1.5" height="1.5" fill="#fff"/>
<rect x="41" y="121" width="2" height="2" fill="#fff"/><rect x="42" y="122" width="2" height="2" fill="#9a9a9a"/><rect x="41" y="121" width="1.5" height="1.5" fill="#fff"/>
<rect x="45" y="121" width="2" height="2" fill="#fff"/><rect x="46" y="122" width="2" height="2" fill="#9a9a9a"/><rect x="45" y="121" width="1.5" height="1.5" fill="#fff"/>
<rect x="49" y="121" width="2" height="2" fill="#fff"/><rect x="50" y="122" width="2" height="2" fill="#9a9a9a"/><rect x="49" y="121" width="1.5" height="1.5" fill="#fff"/>
<rect x="53" y="121" width="2" height="2" fill="#fff"/><rect x="54" y="122" width="2" height="2" fill="#9a9a9a"/><rect x="53" y="121" width="1.5" height="1.5" fill="#fff"/>
<rect x="57" y="121" width="2" height="2" fill="#fff"/><rect x="58" y="122" width="2" height="2" fill="#9a9a9a"/><rect x="57" y="121" width="1.5" height="1.5" fill="#fff"/>
<rect x="1" y="375" width="2" height="2" fill="#fff"/><rect x="2" y="376" width="2" height="2" fill="#9a9a9a"/><rect x="1" y="375" width="1.5" height="1.5" fill="#fff"/>
<rect x="5" y="375" width="2" height="2" fill="#fff"/><rect x="6" y="376" width="2" height="2" fill="#9a9a9a"/><rect x="5" y="375" width="1.5" height="1.5" fill="#fff"/>
<rect x="9" y="375" width="2" height="2" fill="#fff"/><rect x="10" y="376" width="2" height="2" fill="#9a9a9a"/><rect x="9" y="375" width="1.5" height="1.5" fill="#fff"/>
<rect x="13" y="375" width="2" height="2" fill="#fff"/><rect x="14" y="376" width="2" height="2" fill="#9a9a9a"/><rect x="13" y="375" width="1.5" height="1.5" fill="#fff"/>
<rect x="17" y="375" width="2" height="2" fill="#fff"/><rect x="18" y="376" width="2" height="2" fill="#9a9a9a"/><rect x="17" y="375" width="1.5" height="1.5" fill="#fff"/>
<rect x="21" y="375" width="2" height="2" fill="#fff"/><rect x="22" y="376" width="2" height="2" fill="#9a9a9a"/><rect x="21" y="375" width="1.5" height="1.5" fill="#fff"/>
<rect x="25" y="375" width="2" height="2" fill="#fff"/><rect x="26" y="376" width="2" height="2" fill="#9a9a9a"/><rect x="25" y="375" width="1.5" height="1.5" fill="#fff"/>
<rect x="29" y="375" width="2" height="2" fill="#fff"/><rect x="30" y="376" width="2" height="2" fill="#9a9a9a"/><rect x="29" y="375" width="1.5" height="1.5" fill="#fff"/>
<rect x="33" y="375" width="2" height="2" fill="#fff"/><rect x="34" y="376" width="2" height="2" fill="#9a9a9a"/><rect x="33" y="375" width="1.5" height="1.5" fill="#fff"/>
<rect x="37" y="375" width="2" height="2" fill="#fff"/><rect x="38" y="376" width="2" height="2" fill="#9a9a9a"/><rect x="37" y="375" width="1.5" height="1.5" fill="#fff"/>
<rect x="41" y="375" width="2" height="2" fill="#fff"/><rect x="42" y="376" width="2" height="2" fill="#9a9a9a"/><rect x="41" y="375" width="1.5" height="1.5" fill="#fff"/>
<rect x="45" y="375" width="2" height="2" fill="#fff"/><rect x="46" y="376" width="2" height="2" fill="#9a9a9a"/><rect x="45" y="375" width="1.5" height="1.5" fill="#fff"/>
<rect x="49" y="375" width="2" height="2" fill="#fff"/><rect x="50" y="376" width="2" height="2" fill="#9a9a9a"/><rect x="49" y="375" width="1.5" height="1.5" fill="#fff"/>
<rect x="53" y="375" width="2" height="2" fill="#fff"/><rect x="54" y="376" width="2" height="2" fill="#9a9a9a"/><rect x="53" y="375" width="1.5" height="1.5" fill="#fff"/>
<rect x="57" y="375" width="2" height="2" fill="#fff"/><rect x="58" y="376" width="2" height="2" fill="#9a9a9a"/><rect x="57" y="375" width="1.5" height="1.5" fill="#fff"/>
<rect x="64" y="113" width="24" height="24" fill="#858899"/>
<g transform="translate(64,113)"><rect x="4" y="5" width="16" height="3.5" rx="1" fill="#4a5f8a"/><rect x="4" y="10.5" width="16" height="3.5" rx="1" fill="#4a5f8a"/><rect x="4" y="16" width="16" height="3.5" rx="1" fill="#4a5f8a"/></g>
<rect x="92" y="113" width="24" height="24" fill="#858899"/>
<g transform="translate(92,113)"><rect x="7" y="7" width="11" height="10" fill="#eef2fb" stroke="#333" stroke-width=".8"/><path d="M3,4 l3,3 M21,4 l-3,3 M3,20 l3,-3 M21,20 l-3,-3" stroke="#33c033" stroke-width="2.4"/></g>
<rect x="120" y="113" width="24" height="24" fill="#858899"/>
<g transform="translate(120,113)"><circle cx="14" cy="11" r="5.5" fill="#b8cce6" stroke="#6a8ab0" stroke-width="1.3"/><path d="M10,15 L5,20" stroke="#ccc" stroke-width="2.2"/><path d="M6,6 Q8,4 10,8 M5,11 Q7,10 8,14" stroke="#c8d0e0" stroke-width="1" fill="none"/></g>
<rect x="148" y="113" width="24" height="24" fill="#858899"/>
<g transform="translate(148,113)"><path d="M3,13 L13,7 L21,12 L12,19Z" fill="none" stroke="#666" stroke-width=".6"/><path d="M12,14 V3" stroke="#1a7ae8" stroke-width="2"/><path d="M12,14 L20,9" stroke="#33c033" stroke-width="1.8"/><path d="M12,14 L18,20" stroke="#e02020" stroke-width="2"/><circle cx="12" cy="14" r="1.8" fill="#fff" stroke="#333" stroke-width=".4"/></g>
<rect x="176" y="113" width="24" height="24" fill="#858899"/>
<g transform="translate(176,113)"><g transform="translate(.5,.5)"><path d="M12,3 V13 M3,17 L12,13 L21,17" fill="none" stroke="#000" stroke-width="1"/><path d="M12,3 L21,7 L12,11 L3,7Z" fill="#3cd23c"/><path d="M12,3 L21,7 L12,11 L3,7Z M3,7 V17 L12,21 L21,17 V7 M12,11 V21" fill="none" stroke="#000" stroke-width="1"/></g></g>
<rect x="204" y="113" width="24" height="24" fill="#858899"/>
<g transform="translate(204,113)"><g transform="translate(.5,.5)"><path d="M12,3 V13 M3,17 L12,13 L21,17" fill="none" stroke="#000" stroke-width="1"/><path d="M12,13 L21,17 L12,21 L3,17Z" fill="#3cd23c"/><path d="M12,3 L21,7 L12,11 L3,7Z M3,7 V17 L12,21 L21,17 V7 M12,11 V21" fill="none" stroke="#000" stroke-width="1"/></g></g>
<rect x="232" y="113" width="24" height="24" fill="#858899"/>
<g transform="translate(232,113)"><g transform="translate(.5,.5)"><path d="M12,3 V13 M3,17 L12,13 L21,17" fill="none" stroke="#000" stroke-width="1"/><path d="M3,7 L12,3 L12,13 L3,17Z" fill="#3cd23c"/><path d="M12,3 L21,7 L12,11 L3,7Z M3,7 V17 L12,21 L21,17 V7 M12,11 V21" fill="none" stroke="#000" stroke-width="1"/></g></g>
<rect x="260" y="113" width="24" height="24" fill="#858899"/>
<g transform="translate(260,113)"><g transform="translate(.5,.5)"><path d="M12,3 V13 M3,17 L12,13 L21,17" fill="none" stroke="#000" stroke-width="1"/><path d="M12,11 L21,7 L21,17 L12,21Z" fill="#3cd23c"/><path d="M12,3 L21,7 L12,11 L3,7Z M3,7 V17 L12,21 L21,17 V7 M12,11 V21" fill="none" stroke="#000" stroke-width="1"/></g></g>
<rect x="288" y="113" width="24" height="24" fill="#858899"/>
<g transform="translate(288,113)"><g transform="translate(.5,.5)"><path d="M12,3 V13 M3,17 L12,13 L21,17" fill="none" stroke="#000" stroke-width="1"/><path d="M3,7 L12,11 L12,21 L3,17Z" fill="#3cd23c"/><path d="M12,3 L21,7 L12,11 L3,7Z M3,7 V17 L12,21 L21,17 V7 M12,11 V21" fill="none" stroke="#000" stroke-width="1"/></g></g>
<rect x="316" y="113" width="24" height="24" fill="#858899"/>
<g transform="translate(316,113)"><g transform="translate(.5,.5)"><path d="M12,3 V13 M3,17 L12,13 L21,17" fill="none" stroke="#000" stroke-width="1"/><path d="M12,3 L21,7 L21,17 L12,13Z" fill="#3cd23c"/><path d="M12,3 L21,7 L12,11 L3,7Z M3,7 V17 L12,21 L21,17 V7 M12,11 V21" fill="none" stroke="#000" stroke-width="1"/></g></g>
<rect x="344" y="113" width="24" height="24" fill="#858899"/>
<g transform="translate(344,113)"><path d="M12,3 L21,7 L12,11 L3,7Z" fill="#6ee05a" stroke="#1a8a1a" stroke-width=".8"/><path d="M3,7 L12,11 V21 L3,17Z" fill="#3cc83c" stroke="#1a8a1a" stroke-width=".8"/><path d="M12,11 L21,7 V17 L12,21Z" fill="#58d848" stroke="#1a8a1a" stroke-width=".8"/></g>
<rect x="64" y="141" width="24" height="24" fill="#858899"/>
<g transform="translate(64,141)"><path d="M7,6 V17 A5,2 0 0 0 17,17 V6" fill="none" stroke="#222" stroke-width="1"/><ellipse cx="12" cy="6" rx="5" ry="2" fill="none" stroke="#222" stroke-width="1"/><path d="M7,16 A5,2 0 0 0 17,16" fill="none" stroke="#222" stroke-width=".7"/></g>
<rect x="64" y="169" width="24" height="24" fill="#858899"/>
<g transform="translate(64,169)"><path d="M7,6 V17 A5,2 0 0 0 17,17 V6" fill="none" stroke="#222" stroke-width="1"/><ellipse cx="12" cy="6" rx="5" ry="2" fill="none" stroke="#222" stroke-width="1"/><path d="M7,16 A5,2 0 0 0 17,16" fill="none" stroke="#222" stroke-width=".7"/></g>
<rect x="64.5" y="197.5" width="23" height="23" fill="#8c815a" stroke="#e8c870" stroke-width="1"/>
<g transform="translate(64,197)"><path d="M7,6 V17 A5,2 0 0 0 17,17 V6" fill="#5a8ad8" stroke="#223" stroke-width="1"/><ellipse cx="12" cy="6" rx="5" ry="2" fill="#8ab0ea" stroke="#223" stroke-width="1"/></g>
<rect x="64" y="225" width="24" height="24" fill="#858899"/>
<g transform="translate(64,225)"><path d="M7,6 V17 A5,2 0 0 0 17,17 V6" fill="#dfe6f4" stroke="#223" stroke-width="1"/><ellipse cx="12" cy="6" rx="5" ry="2" fill="#eef2fa" stroke="#223" stroke-width="1"/></g>
<rect x="64" y="253" width="24" height="24" fill="#858899"/>
<g transform="translate(64,253)"><path d="M7,6 V17 A5,2 0 0 0 17,17 V6" fill="none" stroke="#222" stroke-width="1"/><ellipse cx="12" cy="6" rx="5" ry="2" fill="none" stroke="#222" stroke-width="1"/><path d="M7,16 A5,2 0 0 0 17,16" fill="none" stroke="#222" stroke-width=".7"/><path d="M9,7 L10,18 M13,8 L11,13 L14,18 M9,11 L14,13" stroke="#222" stroke-width=".7" fill="none"/></g></svg>

<svg class="a" style="left:0;top:0" width="1920" height="1048" viewBox="0 0 1920 1048" shape-rendering="crispEdges"><defs><pattern id="mesh" patternUnits="userSpaceOnUse" width="69.60" height="42.00" x="5" y="3"><rect width="69.60" height="42.00" fill="#006e6c"/><path d="M-23.50,5.25h23M11.30,5.25h23M46.10,5.25h23M80.90,5.25h23M-6.10,15.75h23M28.70,15.75h23M63.50,15.75h23M98.30,15.75h23M-23.50,26.25h23M11.30,26.25h23M46.10,26.25h23M80.90,26.25h23M-6.10,36.75h23M28.70,36.75h23M63.50,36.75h23M98.30,36.75h23M5.80,-37.75v28M5.80,4.25v28M5.80,46.25v28M17.40,-16.75v28M17.40,25.25v28M17.40,67.25v28M29.00,-37.75v28M29.00,4.25v28M29.00,46.25v28M40.60,-16.75v28M40.60,25.25v28M40.60,67.25v28M52.20,-37.75v28M52.20,4.25v28M52.20,46.25v28M63.80,-16.75v28M63.80,25.25v28M63.80,67.25v28" stroke="#5a0c0c" stroke-width="1" fill="none" shape-rendering="crispEdges"/><g fill="#000"><rect x="10.60" y="4.25" width="1.5" height="1.5"/><rect x="45.40" y="25.25" width="1.5" height="1.5"/></g></pattern><pattern id="redgrid" patternUnits="userSpaceOnUse" width="69.60" height="42.00" x="571" y="373"><rect width="69.60" height="42.00" fill="#006e6c"/><path d="M-23.50,5.25h23M11.30,5.25h23M46.10,5.25h23M80.90,5.25h23M-6.10,15.75h23M28.70,15.75h23M63.50,15.75h23M98.30,15.75h23M-23.50,26.25h23M11.30,26.25h23M46.10,26.25h23M80.90,26.25h23M-6.10,36.75h23M28.70,36.75h23M63.50,36.75h23M98.30,36.75h23M5.80,-37.75v28M5.80,4.25v28M5.80,46.25v28M17.40,-16.75v28M17.40,25.25v28M17.40,67.25v28M29.00,-37.75v28M29.00,4.25v28M29.00,46.25v28M40.60,-16.75v28M40.60,25.25v28M40.60,67.25v28M52.20,-37.75v28M52.20,4.25v28M52.20,46.25v28M63.80,-16.75v28M63.80,25.25v28M63.80,67.25v28" stroke="#5a0c0c" stroke-width="1" fill="none" shape-rendering="crispEdges"/><g fill="#ff1a1a"><rect x="2.80" y="4.25" width="6" height="2"/><rect x="4.80" y="2.25" width="2" height="6"/><rect x="8.80" y="4.75" width="3.5" height="1"/><rect x="2.80" y="14.75" width="6" height="2"/><rect x="4.80" y="12.75" width="2" height="6"/><rect x="8.80" y="15.25" width="3.5" height="1"/><rect x="2.80" y="25.25" width="6" height="2"/><rect x="4.80" y="23.25" width="2" height="6"/><rect x="8.80" y="25.75" width="3.5" height="1"/><rect x="2.80" y="35.75" width="6" height="2"/><rect x="4.80" y="33.75" width="2" height="6"/><rect x="8.80" y="36.25" width="3.5" height="1"/><rect x="14.40" y="4.25" width="6" height="2"/><rect x="16.40" y="2.25" width="2" height="6"/><rect x="20.40" y="4.75" width="3.5" height="1"/><rect x="14.40" y="14.75" width="6" height="2"/><rect x="16.40" y="12.75" width="2" height="6"/><rect x="20.40" y="15.25" width="3.5" height="1"/><rect x="14.40" y="25.25" width="6" height="2"/><rect x="16.40" y="23.25" width="2" height="6"/><rect x="20.40" y="25.75" width="3.5" height="1"/><rect x="14.40" y="35.75" width="6" height="2"/><rect x="16.40" y="33.75" width="2" height="6"/><rect x="20.40" y="36.25" width="3.5" height="1"/><rect x="26.00" y="4.25" width="6" height="2"/><rect x="28.00" y="2.25" width="2" height="6"/><rect x="32.00" y="4.75" width="3.5" height="1"/><rect x="26.00" y="14.75" width="6" height="2"/><rect x="28.00" y="12.75" width="2" height="6"/><rect x="32.00" y="15.25" width="3.5" height="1"/><rect x="26.00" y="25.25" width="6" height="2"/><rect x="28.00" y="23.25" width="2" height="6"/><rect x="32.00" y="25.75" width="3.5" height="1"/><rect x="26.00" y="35.75" width="6" height="2"/><rect x="28.00" y="33.75" width="2" height="6"/><rect x="32.00" y="36.25" width="3.5" height="1"/><rect x="37.60" y="4.25" width="6" height="2"/><rect x="39.60" y="2.25" width="2" height="6"/><rect x="43.60" y="4.75" width="3.5" height="1"/><rect x="37.60" y="14.75" width="6" height="2"/><rect x="39.60" y="12.75" width="2" height="6"/><rect x="43.60" y="15.25" width="3.5" height="1"/><rect x="37.60" y="25.25" width="6" height="2"/><rect x="39.60" y="23.25" width="2" height="6"/><rect x="43.60" y="25.75" width="3.5" height="1"/><rect x="37.60" y="35.75" width="6" height="2"/><rect x="39.60" y="33.75" width="2" height="6"/><rect x="43.60" y="36.25" width="3.5" height="1"/><rect x="49.20" y="4.25" width="6" height="2"/><rect x="51.20" y="2.25" width="2" height="6"/><rect x="55.20" y="4.75" width="3.5" height="1"/><rect x="49.20" y="14.75" width="6" height="2"/><rect x="51.20" y="12.75" width="2" height="6"/><rect x="55.20" y="15.25" width="3.5" height="1"/><rect x="49.20" y="25.25" width="6" height="2"/><rect x="51.20" y="23.25" width="2" height="6"/><rect x="55.20" y="25.75" width="3.5" height="1"/><rect x="49.20" y="35.75" width="6" height="2"/><rect x="51.20" y="33.75" width="2" height="6"/><rect x="55.20" y="36.25" width="3.5" height="1"/><rect x="60.80" y="4.25" width="6" height="2"/><rect x="62.80" y="2.25" width="2" height="6"/><rect x="66.80" y="4.75" width="3.5" height="1"/><rect x="60.80" y="14.75" width="6" height="2"/><rect x="62.80" y="12.75" width="2" height="6"/><rect x="66.80" y="15.25" width="3.5" height="1"/><rect x="60.80" y="25.25" width="6" height="2"/><rect x="62.80" y="23.25" width="2" height="6"/><rect x="66.80" y="25.75" width="3.5" height="1"/><rect x="60.80" y="35.75" width="6" height="2"/><rect x="62.80" y="33.75" width="2" height="6"/><rect x="66.80" y="36.25" width="3.5" height="1"/></g></pattern><pattern id="redv" patternUnits="userSpaceOnUse" width="69.60" height="42.00" x="571" y="373"><rect width="69.60" height="42.00" fill="#006e6c"/><path d="M-23.50,5.25h23M11.30,5.25h23M46.10,5.25h23M80.90,5.25h23M-6.10,15.75h23M28.70,15.75h23M63.50,15.75h23M98.30,15.75h23M-23.50,26.25h23M11.30,26.25h23M46.10,26.25h23M80.90,26.25h23M-6.10,36.75h23M28.70,36.75h23M63.50,36.75h23M98.30,36.75h23M5.80,-37.75v28M5.80,4.25v28M5.80,46.25v28M17.40,-16.75v28M17.40,25.25v28M17.40,67.25v28M29.00,-37.75v28M29.00,4.25v28M29.00,46.25v28M40.60,-16.75v28M40.60,25.25v28M40.60,67.25v28M52.20,-37.75v28M52.20,4.25v28M52.20,46.25v28M63.80,-16.75v28M63.80,25.25v28M63.80,67.25v28" stroke="#5a0c0c" stroke-width="1" fill="none" shape-rendering="crispEdges"/><g fill="#ff1a1a"><rect x="5.10" y="2.25" width="1.6" height="6"/><rect x="5.10" y="12.75" width="1.6" height="6"/><rect x="5.10" y="23.25" width="1.6" height="6"/><rect x="5.10" y="33.75" width="1.6" height="6"/><rect x="16.70" y="2.25" width="1.6" height="6"/><rect x="16.70" y="12.75" width="1.6" height="6"/><rect x="16.70" y="23.25" width="1.6" height="6"/><rect x="16.70" y="33.75" width="1.6" height="6"/><rect x="28.30" y="2.25" width="1.6" height="6"/><rect x="28.30" y="12.75" width="1.6" height="6"/><rect x="28.30" y="23.25" width="1.6" height="6"/><rect x="28.30" y="33.75" width="1.6" height="6"/><rect x="39.90" y="2.25" width="1.6" height="6"/><rect x="39.90" y="12.75" width="1.6" height="6"/><rect x="39.90" y="23.25" width="1.6" height="6"/><rect x="39.90" y="33.75" width="1.6" height="6"/><rect x="51.50" y="2.25" width="1.6" height="6"/><rect x="51.50" y="12.75" width="1.6" height="6"/><rect x="51.50" y="23.25" width="1.6" height="6"/><rect x="51.50" y="33.75" width="1.6" height="6"/><rect x="63.10" y="2.25" width="1.6" height="6"/><rect x="63.10" y="12.75" width="1.6" height="6"/><rect x="63.10" y="23.25" width="1.6" height="6"/><rect x="63.10" y="33.75" width="1.6" height="6"/></g></pattern><linearGradient id="gpipe" x1="0" y1="0" x2="0" y2="1"><stop offset="0" stop-color="#0e6a72"/><stop offset=".3" stop-color="#1a9aa2"/><stop offset="1" stop-color="#0a5e66"/></linearGradient></defs>
<polygon points="562,331 1100,316 1147,331 1147,347 562,362" fill="#006e6c" stroke="#000" stroke-width="1.6" />
<polygon points="562,331 1100,316 1100,328 562,342" fill="#e27272" stroke="#000" stroke-width="1.6" />
<line x1="562" y1="336" x2="1100" y2="321" stroke="#000" stroke-width="0.8"/>
<line x1="562" y1="339" x2="1100" y2="324" stroke="#000" stroke-width="0.6"/>
<polygon points="674,338.864 684,338.584 684,358.584 674,358.864" fill="#e27272" stroke="#000" stroke-width="1.6" />
<polygon points="818,334.832 828,334.552 828,354.552 818,354.832" fill="#e27272" stroke="#000" stroke-width="1.6" />
<polygon points="968,330.632 978,330.352 978,350.352 968,350.632" fill="#e27272" stroke="#000" stroke-width="1.6" />
<polygon points="1110,326.656 1120,326.376 1120,346.376 1110,346.656" fill="#e27272" stroke="#000" stroke-width="1.6" />
<rect x="818" y="325" width="16" height="11" fill="#0a7070" stroke="#000" stroke-width="1" />
<rect x="1097" y="319" width="15" height="11" fill="#0a7070" stroke="#000" stroke-width="1" />
<polygon points="562,361 1147,347 1147,360 562,374" fill="#e27272" stroke="#000" stroke-width="1.6" />
<line x1="562" y1="366" x2="1147" y2="352" stroke="#000" stroke-width="0.8"/>
<line x1="562" y1="370" x2="1147" y2="356" stroke="#000" stroke-width="0.6"/>
<polygon points="571,374 1140,360 1148,515 912,530 917,835 571,842" fill="url(#mesh)" stroke="none" stroke-width="1.6" />
<polygon points="571,374 700,371 700,488 571,492" fill="url(#redgrid)" stroke="none" stroke-width="1.6" />
<polygon points="575,492 700,488 700,598 575,598" fill="url(#redv)" stroke="none" stroke-width="1.6" />
<polygon points="712,452 842,450 842,465 712,467" fill="#e27272" stroke="#000" stroke-width="1.6" />
<polygon points="561,362 572,362 572,845 563,845" fill="#e27272" stroke="#000" stroke-width="1.6" />
<line x1="566" y1="362" x2="567" y2="845" stroke="#000" stroke-width="0.7"/>
<polygon points="700,372 711,371 720,838 705,838" fill="#e27272" stroke="#000" stroke-width="1.6" />
<line x1="705" y1="372" x2="712" y2="838" stroke="#000" stroke-width="0.7"/>
<polygon points="840,359 861,358 873,836 848,836" fill="#e27272" stroke="#000" stroke-width="1.6" />
<line x1="848" y1="358" x2="858" y2="836" stroke="#000" stroke-width="0.7"/>
<line x1="853" y1="358" x2="865" y2="836" stroke="#000" stroke-width="0.7"/>
<polygon points="997,354 1008,354 1009,540 998,540" fill="#e27272" stroke="#000" stroke-width="1.6" />
<line x1="1002" y1="354" x2="1003" y2="540" stroke="#000" stroke-width="0.7"/>
<polygon points="1136,360 1147,360 1152,515 1140,515" fill="#e27272" stroke="#000" stroke-width="1.6" />
<line x1="1141" y1="360" x2="1146" y2="515" stroke="#000" stroke-width="0.7"/>
<polygon points="567,838 917,832 917,848 567,855" fill="#e27272" stroke="#000" stroke-width="1.6" />
<line x1="567" y1="845" x2="917" y2="839" stroke="#000" stroke-width="0.7"/>
<rect x="843" y="356" width="17" height="11" fill="#0a7070" stroke="#000" stroke-width="1" />
<polygon points="712,464 844,462 844,600 712,600" fill="#3cd83c" stroke="#000" stroke-width="1.6" />
<polygon points="724,478 833,476 834,586 725,587" fill="url(#mesh)" stroke="#000" stroke-width="1.6" />
<line x1="712" y1="470" x2="844" y2="468" stroke="#000" stroke-width="0.8"/>
<line x1="712" y1="474" x2="844" y2="472" stroke="#000" stroke-width="0.6"/>
<line x1="716" y1="464" x2="718" y2="600" stroke="#000" stroke-width="0.8"/>
<line x1="720" y1="464" x2="722" y2="600" stroke="#000" stroke-width="0.6"/>
<line x1="838" y1="462" x2="839" y2="600" stroke="#000" stroke-width="0.8"/>
<line x1="841" y1="462" x2="842" y2="600" stroke="#000" stroke-width="0.6"/>
<line x1="724" y1="592" x2="834" y2="591" stroke="#000" stroke-width="0.8"/>
<line x1="724" y1="596" x2="834" y2="595" stroke="#000" stroke-width="0.6"/>
<rect x="833" y="474" width="17" height="20" fill="#0a6e6e" stroke="#000" stroke-width="1" />
<line x1="841.5" y1="474" x2="841.5" y2="494" stroke="#000" stroke-width="0.8"/>
<circle cx="837" cy="479" r="2" fill="#044" stroke="#000" stroke-width=".6"/>
<circle cx="846" cy="479" r="2" fill="#044" stroke="#000" stroke-width=".6"/>
<circle cx="837" cy="489" r="2" fill="#044" stroke="#000" stroke-width=".6"/>
<circle cx="846" cy="489" r="2" fill="#044" stroke="#000" stroke-width=".6"/>
<rect x="833" y="566" width="17" height="20" fill="#0a6e6e" stroke="#000" stroke-width="1" />
<line x1="841.5" y1="566" x2="841.5" y2="586" stroke="#000" stroke-width="0.8"/>
<circle cx="837" cy="571" r="2" fill="#044" stroke="#000" stroke-width=".6"/>
<circle cx="846" cy="571" r="2" fill="#044" stroke="#000" stroke-width=".6"/>
<circle cx="837" cy="581" r="2" fill="#044" stroke="#000" stroke-width=".6"/>
<circle cx="846" cy="581" r="2" fill="#044" stroke="#000" stroke-width=".6"/>
<polygon points="708,601 852,598 853,621 710,623" fill="#a08a88" stroke="#000" stroke-width="1.6" />
<polygon points="575,598 700,596 700,614 575,616" fill="#a08a88" stroke="#000" stroke-width="1.6" />
<rect x="575" y="606" width="37" height="28" fill="#a08a88" stroke="#000" stroke-width="1.4" />
<rect x="575" y="594" width="37" height="5" fill="#dcd83a" stroke="#000" stroke-width="0.6" />
<rect x="612" y="593" width="88" height="6" fill="#1a7a2a" stroke="#000" stroke-width="0.6" />
<line x1="609" y1="607" x2="610" y2="633" stroke="#d0a020" stroke-width="2"/>
<polygon points="563,630 717,626 717,637 563,641" fill="#dcd83a" stroke="#000" stroke-width="1.6" />
<polygon points="663,577 671,577 674,590 660,590" fill="#8a8a8a" stroke="#000" stroke-width="0.7" />
<rect x="657" y="590" width="20" height="6" fill="#7a7a7a" stroke="#000" stroke-width="0.6" />
<polygon points="688,577 696,577 699,590 685,590" fill="#8a8a8a" stroke="#000" stroke-width="0.7" />
<rect x="682" y="590" width="20" height="6" fill="#7a7a7a" stroke="#000" stroke-width="0.6" />
<rect x="703" y="520" width="10" height="30" fill="#9a9a9a" stroke="#000" stroke-width="0.7" />
<rect x="703" y="555" width="10" height="12" fill="#c01818" stroke="#000" stroke-width="0.6" />
<rect x="704" y="567" width="9" height="15" fill="#dcd83a" stroke="#000" stroke-width="0.6" />
<rect x="712" y="528" width="32" height="9" fill="#dcd83a" stroke="#000" stroke-width="0.6" />
<rect x="725" y="531" width="30" height="7" fill="#e8e8e8" stroke="#000" stroke-width="0.6" />
<rect x="728" y="538" width="12" height="16" fill="#a8a8d0" stroke="#000" stroke-width="0.6" />
<polygon points="440,859 917,850 917,889 440,902" fill="#00a3a3" stroke="#000" stroke-width="1.6" />
<line x1="440" y1="862" x2="917" y2="853" stroke="#888" stroke-width="1.5"/>
<rect x="449" y="902" width="12" height="4" fill="#b0b0b0" stroke="#000" stroke-width="0.6" />
<rect x="453" y="906" width="4" height="18" fill="#117a82" stroke="#000" stroke-width="0.6" />
<polygon points="443,924 467,924 469,930 441,930" fill="#117a82" stroke="#000" stroke-width="0.7" />
<rect x="594" y="895" width="12" height="4" fill="#b0b0b0" stroke="#000" stroke-width="0.6" />
<rect x="598" y="899" width="4" height="21" fill="#117a82" stroke="#000" stroke-width="0.6" />
<polygon points="588,920 612,920 614,926 586,926" fill="#117a82" stroke="#000" stroke-width="0.7" />
<rect x="424" y="872" width="12" height="4" fill="#b0b0b0" stroke="#000" stroke-width="0.6" />
<rect x="428" y="876" width="4" height="13" fill="#117a82" stroke="#000" stroke-width="0.6" />
<polygon points="418,889 442,889 444,895 416,895" fill="#117a82" stroke="#000" stroke-width="0.7" />
<rect x="672" y="866" width="25" height="56" fill="#a08a88" stroke="#000" stroke-width="1" />
<rect x="682" y="870" width="4" height="50" fill="#a08a88" stroke="#000" stroke-width="0.6" />
<rect x="676" y="870" width="3" height="10" fill="#00a3a3" stroke="#000" stroke-width="0.5" />
<rect x="689" y="870" width="3" height="10" fill="#00a3a3" stroke="#000" stroke-width="0.5" />
<rect x="568" y="900" width="30" height="12" fill="#a08a88" stroke="#000" stroke-width="0.8" />
<polygon points="405,472 414,472 417,830 408,830" fill="#3cd83c" stroke="#000" stroke-width="1.6" />
<line x1="410" y1="472" x2="412" y2="830" stroke="#000" stroke-width="1"/>
<polygon points="387,531 410,531 412,749 390,749" fill="#a0a0a0" stroke="#000" stroke-width="1.6" />
<rect x="394" y="548" width="11" height="182" fill="#b8b8cc" stroke="#000" stroke-width="1" />
<rect x="396" y="550" width="3" height="178" fill="#e0e0f0" stroke="none" stroke-width="1.4" />
<rect x="392" y="545" width="15" height="8" fill="#a8a8b8" stroke="#000" stroke-width="1" />
<rect x="392" y="724" width="15" height="8" fill="#a8a8b8" stroke="#000" stroke-width="1" />
<polygon points="408,472 431,472 431,560 410,560" fill="#dcd83a" stroke="#000" stroke-width="1.6" />
<polygon points="413,560 431,560 436,782 418,782" fill="#a4a4a4" stroke="#000" stroke-width="1.6" />
<polygon points="401,215 420,235 421,472 404,472" fill="#3cd83c" stroke="#000" stroke-width="1.6" />
<polygon points="419,300 427,300 431,472 421,472" fill="#a4a4a4" stroke="#000" stroke-width="1.6" />
<line x1="419" y1="300" x2="421" y2="472" stroke="#000" stroke-width="1.2"/>
<line x1="428" y1="300" x2="431" y2="472" stroke="#000" stroke-width="1.2"/>
<polygon points="414,781 437,781 438,830 415,830" fill="#3cd83c" stroke="#000" stroke-width="1.6" />
<line x1="424" y1="781" x2="425" y2="830" stroke="#000" stroke-width="1"/>
<polygon points="414,830 440,830 440,872 416,872" fill="#a8a8a8" stroke="#000" stroke-width="1.6" />
<rect x="419" y="834" width="19" height="34" fill="#00a3a3" stroke="#000" stroke-width="1" />
<polygon points="424,244 559,244 561,860 440,860 431,470" fill="#00d833" stroke="#000" stroke-width="1.6" />
<polygon points="399,212 477,211 500,242 425,244" fill="#8e8e8e" stroke="#000" stroke-width="1.6" />
<polygon points="477,211 527,209 527,241 500,242" fill="#3cd83c" stroke="#000" stroke-width="1.6" />
<line x1="512" y1="212" x2="512" y2="241" stroke="#000" stroke-width="0.8"/>
<polygon points="399,213 425,244 425,316 403,287" fill="#9a9a9a" stroke="#000" stroke-width="1.6" />
<line x1="403" y1="216" x2="425" y2="240" stroke="#000" stroke-width="0.7"/>
<polygon points="440,246 559,243 564,459 488,461 485,362 446,362" fill="#a4a4a4" stroke="#000" stroke-width="1.6" />
<line x1="452" y1="250" x2="453" y2="361" stroke="#000" stroke-width="0.7"/>
<line x1="492" y1="364" x2="494" y2="459" stroke="#000" stroke-width="0.7"/>
<polygon points="463,259 552,256 557,446 510,447 506,350 467,351" fill="#a08a88" stroke="#000" stroke-width="1.6" />
<rect x="507" y="290" width="5" height="28" fill="#1a8a2a" stroke="#000" stroke-width="1" />
<rect x="465" y="260" width="3" height="3" fill="#111"/>
<rect x="507" y="259" width="3" height="3" fill="#111"/>
<rect x="549" y="258" width="3" height="3" fill="#111"/>
<rect x="467" y="346" width="3" height="3" fill="#111"/>
<rect x="507" y="345" width="3" height="3" fill="#111"/>
<rect x="551" y="344" width="3" height="3" fill="#111"/>
<rect x="510" y="443" width="3" height="3" fill="#111"/>
<rect x="554" y="442" width="3" height="3" fill="#111"/>
<polygon points="437,473 484,471 487,578 442,580" fill="#d6d6d6" stroke="#000" stroke-width="1.6" />
<line x1="447" y1="473" x2="451" y2="579" stroke="#000" stroke-width="0.7"/>
<rect x="532" y="460" width="25" height="12" fill="#b0b0b0" stroke="#000" stroke-width="0.8" />
<rect x="535" y="472" width="19" height="100" fill="#a8a8a8" stroke="#000" stroke-width="0.8" />
<rect x="531" y="572" width="26" height="14" fill="#b0b0b0" stroke="#000" stroke-width="0.8" />
<circle cx="476" cy="592" r="7" fill="#2ac02a" stroke="#000" stroke-width=".8"/>
<circle cx="548" cy="643" r="7" fill="#e27272" stroke="#000" stroke-width=".8"/>
<polygon points="446,661 560,657 560,668 446,672" fill="#a08a88" stroke="#000" stroke-width="1.6" />
<polygon points="439,670 577,667 580,798 445,800" fill="#d6d6d6" stroke="#000" stroke-width="1.6" />
<polygon points="439,670 449,670 450,800 443,800" fill="#a08a88" stroke="#000" stroke-width="1.6" />
<polygon points="440,800 567,797 567,855 440,858" fill="#00d833" stroke="#000" stroke-width="1.6" />
<polygon points="582,258 591,258 592,330 583,330" fill="#e87c10" stroke="#000" stroke-width="1.6" />
<line x1="585" y1="258" x2="586" y2="330" stroke="#000" stroke-width="0.6"/>
<rect x="576" y="328" width="21" height="3" fill="#e87c10" stroke="#000" stroke-width="0.6" />
<polygon points="727,282 736,282 737,326 728,326" fill="#e87c10" stroke="#000" stroke-width="1.6" />
<line x1="730" y1="282" x2="731" y2="326" stroke="#000" stroke-width="0.6"/>
<rect x="721" y="324" width="21" height="3" fill="#e87c10" stroke="#000" stroke-width="0.6" />
<path d="M560.0,235 L759.0,229 A12.0,12.0 0 0 1 759.0,253 L560.0,259 A12.0,12.0 0 0 1 560.0,235Z" fill="url(#gpipe)" stroke="#000" stroke-width="1"/>
<line x1="560.0" y1="243.4" x2="759.0" y2="237.4" stroke="#043c40" stroke-width="0.8"/>
<line x1="560.0" y1="249.4" x2="759.0" y2="243.4" stroke="#043c40" stroke-width="0.8"/>
<line x1="560.0" y1="254.2" x2="759.0" y2="248.2" stroke="#043c40" stroke-width="0.8"/>
<line x1="560.0" y1="235" x2="560.0" y2="259" stroke="#000" stroke-width="0.8"/>
<line x1="759.0" y1="229" x2="759.0" y2="253" stroke="#000" stroke-width="0.8"/>
<rect x="581" y="222" width="10" height="13" fill="#e87c10" stroke="#000" stroke-width="0.7" />
<rect x="725" y="218" width="10" height="12" fill="#e87c10" stroke="#000" stroke-width="0.7" />
<path d="M580.0,262 L780.0,255 A12.0,12.0 0 0 1 780.0,279 L580.0,286 A12.0,12.0 0 0 1 580.0,262Z" fill="url(#gpipe)" stroke="#000" stroke-width="1"/>
<line x1="580.0" y1="270.4" x2="780.0" y2="263.4" stroke="#043c40" stroke-width="0.8"/>
<line x1="580.0" y1="276.4" x2="780.0" y2="269.4" stroke="#043c40" stroke-width="0.8"/>
<line x1="580.0" y1="281.2" x2="780.0" y2="274.2" stroke="#043c40" stroke-width="0.8"/>
<line x1="580.0" y1="262" x2="580.0" y2="286" stroke="#000" stroke-width="0.8"/>
<line x1="780.0" y1="255" x2="780.0" y2="279" stroke="#000" stroke-width="0.8"/>
<polygon points="603,251 615,251 616,362 604,362" fill="#e87c10" stroke="#000" stroke-width="1.6" />
<line x1="606" y1="251" x2="607" y2="362" stroke="#000" stroke-width="0.6"/>
<rect x="597" y="360" width="24" height="3" fill="#e87c10" stroke="#000" stroke-width="0.6" />
<polygon points="747,247 760,247 761,358 748,358" fill="#e87c10" stroke="#000" stroke-width="1.6" />
<line x1="750" y1="247" x2="751" y2="358" stroke="#000" stroke-width="0.6"/>
<rect x="741" y="356" width="25" height="3" fill="#e87c10" stroke="#000" stroke-width="0.6" />
<rect x="602" y="248" width="13" height="5" fill="#e87c10" stroke="#000" stroke-width="0.6" />
<rect x="746" y="244" width="13" height="5" fill="#e87c10" stroke="#000" stroke-width="0.6" />
<path d="M1051,224 L1060,221 H1098 V245 Q1098,257 1085,258 H1068 Q1058,257 1054,247 L1051,238Z" fill="url(#gpipe)" stroke="#000" stroke-width="1.2"/>
<line x1="1053" y1="236" x2="1098" y2="236" stroke="#000" stroke-width="0.8"/>
<line x1="1056" y1="247" x2="1097" y2="247" stroke="#000" stroke-width="0.8"/>
<line x1="1066" y1="222" x2="1066" y2="257" stroke="#000" stroke-width="0.8"/>
<line x1="1081" y1="222" x2="1081" y2="258" stroke="#000" stroke-width="0.8"/>
<line x1="1090" y1="222" x2="1090" y2="257" stroke="#000" stroke-width="0.8"/>
<polygon points="1053,213 1121,212 1121,220 1053,221" fill="#e87c10" stroke="#000" stroke-width="1.6" />
<polygon points="1060,222 1128,221 1128,230 1060,231" fill="#e87c10" stroke="#000" stroke-width="1.6" />
<polygon points="1114,221 1128,221 1130,327 1116,327" fill="#e87c10" stroke="#000" stroke-width="1.6" />
<line x1="1120" y1="230" x2="1122" y2="327" stroke="#000" stroke-width="0.7"/>
<polygon points="1103,231 1118,231 1118,247" fill="#b8a8a8" stroke="#000" stroke-width="1.6" />
<polygon points="1100,316 1128,330 1147,347 1128,347" fill="#e27272" stroke="#000" stroke-width="0.8" />
<polygon points="909,530 938,520 1149,514 1158,525 1166,885 1167,897 920,897 912,880" fill="#a4a4a4" stroke="#000" stroke-width="1.6" />
<polygon points="927,542 1139,536 1142,880 935,882" fill="#006e6c" stroke="#000" stroke-width="1.6" />
<polygon points="927,542 1139,536 1142,880 935,882" fill="url(#mesh)" stroke="none" stroke-width="1.6" />
<polygon points="999,541 1010,541 1010,556 999,556" fill="#e27272" stroke="#000" stroke-width="1" />
<polygon points="932,559 1136,553 1147,874 943,880" fill="#d6d6d6" stroke="#000" stroke-width="1.6" />
<line x1="909" y1="530" x2="1157" y2="525" stroke="#000" stroke-width="0.8"/>
<line x1="935" y1="541" x2="1148" y2="535" stroke="#000" stroke-width="0.8"/>
<line x1="916" y1="545" x2="922" y2="880" stroke="#000" stroke-width="0.7"/>
<line x1="1148" y1="540" x2="1155" y2="880" stroke="#000" stroke-width="0.7"/>
<line x1="1134" y1="540" x2="1140" y2="880" stroke="#000" stroke-width="0.7"/>
<polygon points="917,880 1166,874 1166,890 922,897" fill="#a8a8a8" stroke="#000" stroke-width="1.6" />
<line x1="918" y1="887" x2="1166" y2="881" stroke="#000" stroke-width="0.8"/>
<line x1="919" y1="884" x2="1166" y2="878" stroke="#000" stroke-width="0.6"/>
<polygon points="869,596 888,596 888,607 869,607" fill="#e27272" stroke="#000" stroke-width="1.6" />
<line x1="869" y1="601" x2="888" y2="601" stroke="#000" stroke-width="0.8"/>
<rect x="888" y="596" width="22" height="12" fill="#a08a88" stroke="#000" stroke-width="1" />
<rect x="891" y="599" width="3" height="7" fill="#000" stroke="none" stroke-width="1.4" />
<rect x="896" y="599" width="3" height="7" fill="#000" stroke="none" stroke-width="1.4" />
<rect x="1160" y="579" width="8" height="8" fill="#e8e8e8" stroke="#000" stroke-width="1" />
<line x1="913" y1="545" x2="919" y2="880" stroke="#000" stroke-width="0.6"/>
<line x1="926" y1="542" x2="932" y2="882" stroke="#000" stroke-width="0.6"/>
<line x1="1158" y1="530" x2="1164" y2="880" stroke="#000" stroke-width="0.6"/>
<rect x="928" y="897" width="30" height="7" fill="#0f6e74" stroke="#000" stroke-width="1" />
<ellipse cx="943" cy="912" rx="9" ry="11" fill="#117a82" stroke="#000" stroke-width="1"/>
<line x1="943" y1="903" x2="943" y2="923" stroke="#000" stroke-width="1"/>
<rect x="934" y="921" width="18" height="6" fill="#0c5a60" stroke="#000" stroke-width="1" />
<rect x="1132" y="891" width="30" height="7" fill="#0f6e74" stroke="#000" stroke-width="1" />
<ellipse cx="1147" cy="906" rx="9" ry="11" fill="#117a82" stroke="#000" stroke-width="1"/>
<line x1="1147" y1="897" x2="1147" y2="917" stroke="#000" stroke-width="1"/>
<rect x="1138" y="915" width="18" height="6" fill="#0c5a60" stroke="#000" stroke-width="1" />
<rect x="966" y="894" width="24" height="22" fill="#a08a88" stroke="#000" stroke-width="1" />
<line x1="978" y1="894" x2="978" y2="916" stroke="#000" stroke-width="1"/>
<rect x="1158" y="890" width="26" height="14" fill="#a08a88" stroke="#000" stroke-width="1" />
<rect x="1159" y="850" width="7" height="42" fill="#a08a88" stroke="#000" stroke-width="1" />
<path d="M943,520 V504 M946,522 V510 M1117,516 V498 M1121,518 V506 L1124,508" stroke="#000" stroke-width="1.4" fill="none"/>
<path d="M944,520 V505 M1118,516 V499" stroke="#b0a8a8" stroke-width=".8" fill="none"/>
<text x="967" y="739" font-family="Liberation Serif" font-size="42" fill="#c8105a" stroke="#1a0008" stroke-width=".6" textLength="146" lengthAdjust="spacingAndGlyphs">PLC电控柜</text>
<g fill="none" stroke="#f5901e" stroke-width="2" opacity="1"><path d="M893,538 V516 M897,536 V512 M901,538 V520 M929,538 V516 M933,536 V512 M925,538 V520 M892,538 H934"/><path d="M905,520 Q913,510 920,518 Q926,528 915,534 Q908,537 905,528" stroke-width="2.4"/></g>
<text x="947" y="530" font-family="Liberation Sans" font-size="17" fill="#f7921c" stroke="#f7921c" stroke-width=".9" textLength="83" lengthAdjust="spacingAndGlyphs">智造资料网</text>
<text x="948" y="537" font-family="Liberation Sans" font-size="5" fill="#f08a20" textLength="81" lengthAdjust="spacingAndGlyphs">INTELLIGENT MANUFACTURING DATA</text>
<polygon points="121,945 146,944 147,966 121,967" fill="#5a7090" stroke="#c8c8c8" stroke-width="1"/>
<line x1="121" y1="942" x2="121" y2="1000" stroke="#18d8e8" stroke-width="2"/>
<line x1="121" y1="942" x2="146" y2="941" stroke="#e01010" stroke-width="2.5"/><line x1="122" y1="944" x2="146" y2="943" stroke="#f0f000" stroke-width="1"/>
<polygon points="145,937 155,941 145,945" fill="#d01010"/>
<path d="M157,936 L165,944 M165,936 L157,944" stroke="#e02020" stroke-width="1"/>
<circle cx="121" cy="943" r="3" fill="#20b020" stroke="#888" stroke-width=".8"/></svg>


<div class="st" style="left:1141px;top:1023px">拴牢</div>
<div class="st" style="left:1486px;top:1003px;clip-path:inset(0 0 8px 0)">绝对 XY 上视图</div>
<div class="st" style="left:1464px;top:1023px;color:#000;clip-path:inset(8px 0 0 0)">LS: 1.00 PS: 1.00</div>
<div class="st" style="left:1601px;top:1003px">绝对视图</div>
<div class="st" style="left:1668px;top:1003px;font-weight:bold">LAYER0</div>
<div class="st" style="left:1589px;top:1023px">单位: 毫米</div>
<div class="st" style="left:1663px;top:1022px;font-size:13px;line-height:16px">X = 01151.39 Y = 22072.23 Z = 00000.00</div>
<svg class="a" style="left:0;top:0" width="1920" height="1048" viewBox="0 0 1920 1048"><rect x="2" y="1020" width="1918" height="1" fill="#a8a8a8"/>
<rect x="1132" y="1023" width="1" height="14" fill="#8a8a8a"/>
<rect x="1175" y="1023" width="1" height="14" fill="#8a8a8a"/>
<rect x="1206" y="1023" width="1" height="14" fill="#8a8a8a"/>
<rect x="1237" y="1023" width="1" height="14" fill="#8a8a8a"/>
<rect x="1268" y="1023" width="1" height="14" fill="#8a8a8a"/>
<rect x="1299" y="1023" width="1" height="14" fill="#8a8a8a"/>
<rect x="1330" y="1023" width="1" height="14" fill="#8a8a8a"/>
<rect x="1361" y="1023" width="1" height="14" fill="#8a8a8a"/>
<rect x="1392" y="1023" width="1" height="14" fill="#8a8a8a"/>
<rect x="1423" y="1023" width="1" height="14" fill="#8a8a8a"/>
<rect x="1454" y="1023" width="1" height="14" fill="#8a8a8a"/>
<rect x="1580" y="1023" width="1" height="14" fill="#8a8a8a"/>
<rect x="1654" y="1023" width="1" height="14" fill="#8a8a8a"/>
<rect x="1592" y="1004" width="1" height="13" fill="#8a8a8a"/>
<rect x="1726" y="1004" width="1" height="13" fill="#8a8a8a"/>
<rect x="1757" y="1004" width="1" height="13" fill="#8a8a8a"/>
<rect x="1801" y="1004" width="1" height="13" fill="#8a8a8a"/>
<rect x="1844" y="1004" width="1" height="13" fill="#8a8a8a"/>
<rect x="1887" y="1004" width="1" height="13" fill="#8a8a8a"/>
<path d="M1338,1004 V1018" stroke="#fff" stroke-width="2" stroke-dasharray="1,1.5"/>
<path d="M1475,1004 V1018" stroke="#fff" stroke-width="2" stroke-dasharray="1,1.5"/>
<path d="M1659,1004 V1018" stroke="#fff" stroke-width="2" stroke-dasharray="1,1.5"/>
<rect x="1341" y="1003" width="131" height="16" fill="#fff"/>
<circle cx="1468" cy="1011" r="3.5" fill="none" stroke="#4a78c0" stroke-width="1"/>
<rect x="1762" y="1005" width="32" height="11" fill="#4a6391"/>
<rect x="1805" y="1005" width="32" height="11" fill="#4a6391"/>
<rect x="1848" y="1005" width="32" height="11" fill="#4a6391"/>
<circle cx="1900" cy="1010" r="6" fill="#1a8a2a"/><path d="M1896,1006 Q1900,1009 1898,1014 M1902,1005 Q1905,1010 1903,1015" stroke="#1a50d0" stroke-width="2" fill="none"/>
<g transform="translate(1182,1022)"><rect x=".5" y=".5" width="16" height="16" fill="#d8dce8" stroke="#777" stroke-width="1"/><path d="M3,8 Q4,3 11,3 L11,1 L14,4 L11,7 V5 Q6,5 5,8Z" fill="#e85a6a"/><path d="M14,9 Q13,14 6,14 L6,16 L3,13 L6,10 V12 Q11,12 12,9Z" fill="#e85a6a"/><circle cx="8.5" cy="8.5" r="1.6" fill="#6aa8e0"/></g>
<rect x="1212" y="1021" width="18" height="17" fill="#fce079"/>
<g transform="translate(1212,1021)"><path d="M2,2 L10,5 L12,12 L4,10Z" fill="#c050d0"/><circle cx="6" cy="5" r="3" fill="#f0e030"/><path d="M9,7 L9,16 L11.5,13.5 L14,17 L15.5,16 L13,12.5 L16,12Z" fill="#f0f0f0" stroke="#555" stroke-width=".6"/></g>
<g transform="translate(1246,1022)"><path d="M3,7 L9,2 L14,4 L10,9Z" fill="#e8b060" stroke="#8a6020" stroke-width=".5"/><rect x="2" y="8" width="9" height="8" fill="#fff" stroke="#445" stroke-width=".7"/><circle cx="5" cy="12" r="1.5" fill="#3a78d8"/><circle cx="8" cy="12" r="1.5" fill="#3a78d8"/></g>
<g transform="translate(1277,1022)"><path d="M4,6 Q4,1 8,1 Q12,1 12,5 Q12,8 9,9 V11 H7 V8 Q10,7 10,5 Q10,3 8,3 Q6,3 6,6Z" fill="#5a8ad8"/><circle cx="8" cy="14" r="1.4" fill="#5a8ad8"/><ellipse cx="9" cy="16" rx="6" ry="1.2" fill="#999" opacity=".5"/></g>
<g transform="translate(1305,1022)"><path d="M4,2 L8,0 L12,2 V7 L8,9 L4,7Z" fill="#5aa0f0" stroke="#2a5aa8" stroke-width=".5"/><path d="M9,8 L13,6 L17,8 V13 L13,15 L9,13Z" fill="#8ab0c0" stroke="#223" stroke-width=".6"/><path d="M1,11 H8 M5,8 L8,11 L5,14" stroke="#e81010" stroke-width="1.6" fill="none"/></g>
<rect x="1336" y="1021" width="18" height="17" fill="#fce079"/>
<g transform="translate(1337,1022)"><path d="M2,4 L8,1 L14,4 L8,7Z" fill="#e030f0"/><path d="M2,4 L8,7 V15 L2,12Z" fill="#6a9aa0" stroke="#2a4aa8" stroke-width=".6"/><path d="M8,7 L14,4 V12 L8,15Z" fill="#8abab8" stroke="#2a4aa8" stroke-width=".6"/></g>
<rect x="1371" y="1030" width="10" height="8" fill="none" stroke="#6a7a6a" stroke-width="1"/>
<path d="M1399,1033 A6,6 0 0 0 1413,1033" fill="none" stroke="#2a9a2a" stroke-width="1.8"/>
<rect x="1430" y="1030" width="7" height="8" fill="none" stroke="#8a8aa0" stroke-width="1"/><rect x="1437" y="1030" width="7" height="8" fill="none" stroke="#8a8aa0" stroke-width="1"/>
<rect x="1382.5" y="1009.5" width="182" height="22" fill="#fff" stroke="#d0d0d0" stroke-width="1"/>
<g transform="translate(1373,1019) rotate(-12)"><rect x="-12" y="-12" width="24" height="24" rx="5" fill="#f25a22"/><path d="M7,-6 Q3,-9 -3,-8 Q-8,-6 -6,-2 Q-4,1 3,1 Q8,2 6,6 Q3,9 -7,7" stroke="#fff" stroke-width="3.6" fill="none"/></g>
<g transform="translate(1393,1012)"><path d="M1,5 H13 V11 H1Z" fill="none" stroke="#2a7ad6" stroke-width="2"/><path d="M7,1 V16" stroke="#2a7ad6" stroke-width="2.2"/></g>
<g transform="translate(1415,1012)"><circle cx="3" cy="6" r="1.8" fill="none" stroke="#2a7ad6" stroke-width="1.2"/><path d="M9,9 Q11,10 9,14" stroke="#2a7ad6" stroke-width="2.4" fill="none"/></g>
<g transform="translate(1436,1012)"><circle cx="8" cy="8" r="7" fill="none" stroke="#2a7ad6" stroke-width="1.8"/><circle cx="5.5" cy="6" r="1" fill="#2a7ad6"/><circle cx="10.5" cy="6" r="1" fill="#2a7ad6"/><path d="M4.5,9.5 Q8,13 11.5,9.5" stroke="#2a7ad6" stroke-width="1.4" fill="none"/></g>
<g transform="translate(1460,1012)"><rect x="3" y="0" width="6" height="11" rx="3" fill="#2a7ad6"/><path d="M1,7 Q1,13 6,13 Q11,13 11,7 M6,13 V16 M3,16 H9" stroke="#2a7ad6" stroke-width="1.4" fill="none"/></g>
<g transform="translate(1480,1013)"><rect x="1" y="1" width="15" height="11" rx="1.5" fill="none" stroke="#2a7ad6" stroke-width="1.8"/><path d="M4,4.5 H13 M4,7 H13 M5,9.5 H12" stroke="#2a7ad6" stroke-width="1.2" stroke-dasharray="1.3,1"/></g>
<g transform="translate(1503,1012)"><circle cx="7" cy="4" r="3" fill="#c8ccd4"/><path d="M1,14 Q1,8 7,8 Q13,8 13,14Z" fill="#c8ccd4"/><circle cx="12" cy="13" r="3" fill="#fff"/><text x="12" y="15.5" font-size="6" text-anchor="middle" fill="#c8ccd4" font-family="Liberation Sans">7</text></g>
<g transform="translate(1525,1012)"><path d="M4,1 L1,4 L3,7 H4 V15 H12 V7 H13 L15,4 L12,1 Q8,4 4,1Z" fill="#2a7ad6"/></g>
<g transform="translate(1547,1013)"><rect x="1" y="1" width="6" height="6" fill="#2a7ad6"/><rect x="8" y="1" width="6" height="6" fill="none" stroke="#2a7ad6" stroke-width="1.4"/><rect x="1" y="8" width="6" height="6" fill="#2a7ad6"/><rect x="8" y="8" width="6" height="6" fill="#2a7ad6"/></g></svg>

<div class="a" style="left:48px;top:1040px;width:344px;height:8px;background:#f0f0f0"></div>
<div class="a" style="left:590px;top:1040px;width:47px;height:8px;background:#3c3c3c"></div>
<div class="a" style="left:1915px;top:1040px;width:1px;height:8px;background:#555"></div>
<div class="a" style="left:1816px;top:1043px;font-size:12px;line-height:15px;color:#fff">10:50</div>

</body></html>
